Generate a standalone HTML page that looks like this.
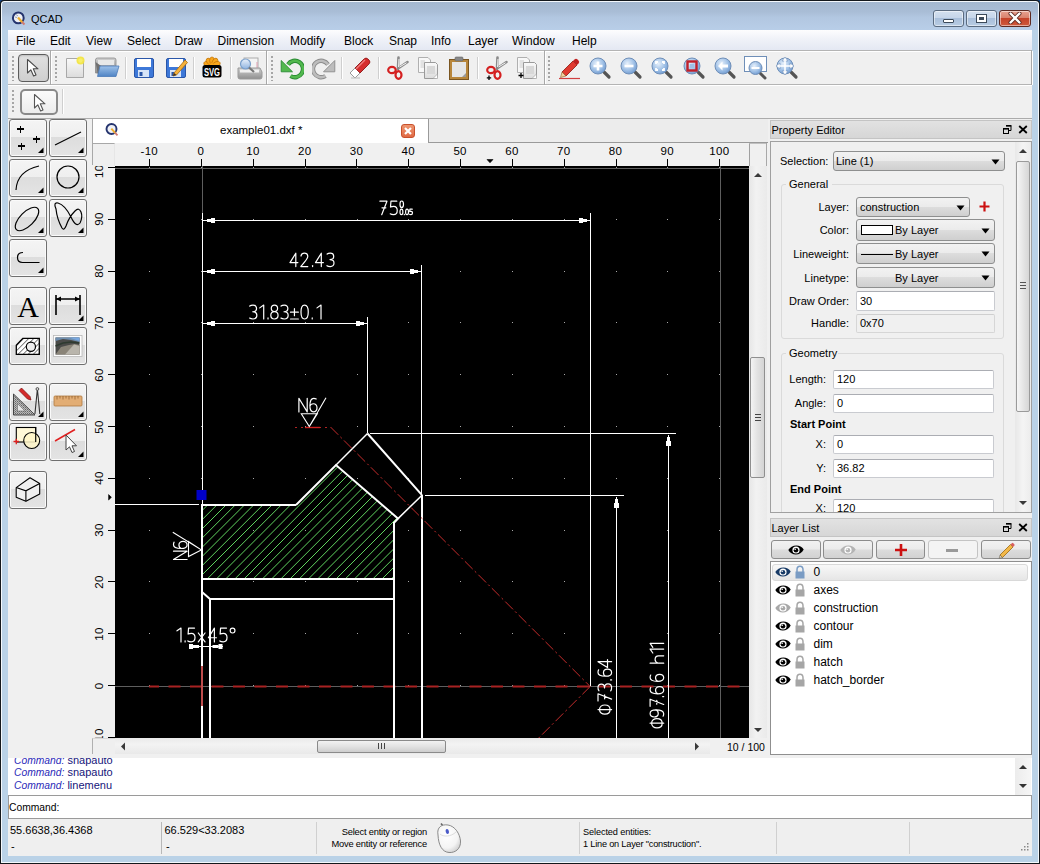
<!DOCTYPE html><html><head><meta charset="utf-8"><style>
*{box-sizing:border-box;margin:0;padding:0}
html,body{width:1040px;height:864px;overflow:hidden;background:#16488a;font-family:"Liberation Sans",sans-serif;font-size:12px;color:#000}
div,span,svg{position:absolute}
.t{white-space:nowrap;line-height:1}
.sep{width:2px;border-left:1px solid #c5c5c5;border-right:1px solid #fff}
.grip{width:2px;background:repeating-linear-gradient(#9a9a9a 0 1px,#fff 1px 2px,transparent 2px 3px)}
.pal{width:38px;height:38px;border:1px solid #6f6f6f;border-radius:3px;box-shadow:inset 0 0 0 1px #fafafa;background:linear-gradient(#f4f4f4 0%,#efefef 47%,#dddddd 48%,#e4e4e4 100%)}
.pal .tri{right:3px;bottom:3px;width:0;height:0;border-left:8px solid transparent;border-bottom:8px solid #000}
.combo{border:1px solid #8e8f8f;border-radius:3px;background:linear-gradient(#f2f2f2 0%,#ebebeb 49%,#dddddd 50%,#cfcfcf 100%)}
.combo .arr{width:0;height:0;border-left:4px solid transparent;border-right:4px solid transparent;border-top:5px solid #000}
.edit{border:1px solid #abadb3;border-top-color:#abadb3;background:#fff}
.lbl{font-size:11px}
</style></head><body><div style="left:0px;top:0px;width:1040px;height:864px;background:#14181c;border-radius:4px 4px 0 0"></div>
<div style="left:1px;top:1px;width:1038px;height:862px;background:#f4f8fc;border-radius:3.5px 3.5px 0 0"></div>
<div style="left:2px;top:2px;width:1036px;height:860px;background:#bad2e7;border-radius:3px 3px 0 0"></div>
<div style="left:2px;top:2px;width:1036px;height:28px;background:linear-gradient(#a4b8d0 0%,#a9bdd6 35%,#b2c7e1 55%,#b8cee8 100%);border-radius:3px 3px 0 0"></div>
<div style="left:8px;top:30px;width:1024px;height:826px;background:#f0f0f0"></div>
<svg style="left:10px;top:10px" width="17" height="17" viewBox="0 0 17 17">
<circle cx="8.3" cy="7.9" r="5.4" fill="#eef0f6" stroke="#25346e" stroke-width="2"/>
<path d="M6 4.5 L8 6 M5 7 L7 7.5" stroke="#9aa4b8" stroke-width="1"/>
<path d="M8 7.5 L12.5 12.5" stroke="#f0b030" stroke-width="2.2"/><path d="M12 12 L14.5 14.5" stroke="#d07a70" stroke-width="2"/>
</svg>
<span class="t" style="left:31px;top:13.69px;font-size:11px;color:#000;">QCAD</span>
<div style="left:933px;top:10px;width:31px;height:17px;background:linear-gradient(#d3e0ef 0%,#c6d6ea 45%,#a9bfdb 50%,#b8cce3 100%);border:1px solid #5a6b80;border-radius:3px;box-shadow:inset 0 0 0 1px rgba(255,255,255,.5)"></div>
<div style="left:966px;top:10px;width:31px;height:17px;background:linear-gradient(#d3e0ef 0%,#c6d6ea 45%,#a9bfdb 50%,#b8cce3 100%);border:1px solid #5a6b80;border-radius:3px;box-shadow:inset 0 0 0 1px rgba(255,255,255,.5)"></div>
<div style="left:999px;top:10px;width:32px;height:17px;background:linear-gradient(#e8a291 0%,#d9826d 45%,#c5432a 50%,#cf5a3c 100%);border:1px solid #5d2a22;border-radius:3px;box-shadow:inset 0 0 0 1px rgba(255,255,255,.5)"></div>
<div style="left:943px;top:19px;width:11px;height:4px;background:#fff;border:1px solid #3c4a5a;border-radius:1px"></div>
<div style="left:976px;top:14px;width:11px;height:9px;border:1px solid #3c4a5a;background:#fff;box-shadow:inset 0 0 0 2px #fff"></div>
<div style="left:979px;top:17px;width:5px;height:3px;background:#3c4a5a"></div>
<svg style="left:1008px;top:12px" width="14" height="12" viewBox="0 0 14 12">
<path d="M2.5 1.5 L11.5 10.5 M11.5 1.5 L2.5 10.5" stroke="#5a2820" stroke-width="4" stroke-linecap="round"/>
<path d="M2.5 1.5 L11.5 10.5 M11.5 1.5 L2.5 10.5" stroke="#fff" stroke-width="2.4" stroke-linecap="round"/>
</svg>
<div style="left:8px;top:30px;width:1024px;height:20px;background:linear-gradient(#fdfdfe 0%,#f1f3f9 40%,#e4e8f3 100%)"></div>
<span class="t" style="left:16px;top:34.84px;font-size:12px;color:#000;">File</span>
<span class="t" style="left:50px;top:34.84px;font-size:12px;color:#000;">Edit</span>
<span class="t" style="left:86px;top:34.84px;font-size:12px;color:#000;">View</span>
<span class="t" style="left:127px;top:34.84px;font-size:12px;color:#000;">Select</span>
<span class="t" style="left:174.5px;top:34.84px;font-size:12px;color:#000;">Draw</span>
<span class="t" style="left:217.5px;top:34.84px;font-size:12px;color:#000;">Dimension</span>
<span class="t" style="left:290px;top:34.84px;font-size:12px;color:#000;">Modify</span>
<span class="t" style="left:344px;top:34.84px;font-size:12px;color:#000;">Block</span>
<span class="t" style="left:389px;top:34.84px;font-size:12px;color:#000;">Snap</span>
<span class="t" style="left:431px;top:34.84px;font-size:12px;color:#000;">Info</span>
<span class="t" style="left:468px;top:34.84px;font-size:12px;color:#000;">Layer</span>
<span class="t" style="left:512px;top:34.84px;font-size:12px;color:#000;">Window</span>
<span class="t" style="left:572px;top:34.84px;font-size:12px;color:#000;">Help</span>
<svg style="left:0;top:0" width="1" height="1"><defs>
<linearGradient id="gBlue" x1="0" y1="0" x2="0" y2="1"><stop offset="0" stop-color="#8fb6e8"/><stop offset="1" stop-color="#3f74c9"/></linearGradient>
<linearGradient id="gFolder" x1="0" y1="0" x2="0" y2="1"><stop offset="0" stop-color="#9fc2ea"/><stop offset="1" stop-color="#4f84c4"/></linearGradient>
<linearGradient id="gLens" x1="0" y1="0" x2="0" y2="1"><stop offset="0" stop-color="#e9f1fb"/><stop offset="1" stop-color="#8fb3df"/></linearGradient>
<radialGradient id="gZoom" cx=".4" cy=".35" r=".7"><stop offset="0" stop-color="#e6f0fb"/><stop offset=".6" stop-color="#9fc0e6"/><stop offset="1" stop-color="#6d98cf"/></radialGradient>
<linearGradient id="gGreen" x1="0" y1="0" x2="0" y2="1"><stop offset="0" stop-color="#7fd37a"/><stop offset="1" stop-color="#2e9a3a"/></linearGradient>
<linearGradient id="gGray" x1="0" y1="0" x2="0" y2="1"><stop offset="0" stop-color="#d0d0d0"/><stop offset="1" stop-color="#8f8f8f"/></linearGradient>
<linearGradient id="gPaper" x1="0" y1="0" x2="0" y2="1"><stop offset="0" stop-color="#fafafa"/><stop offset="1" stop-color="#dcdcdc"/></linearGradient>
</defs></svg>
<div style="left:8px;top:50px;width:1024px;height:35px;background:#f0f0f0"></div>
<div style="left:8px;top:50px;width:43px;height:1px;background:#b4b4b4"></div>
<div style="left:8px;top:51px;width:43px;height:1px;background:#fff"></div>
<div style="left:8px;top:84px;width:43px;height:1px;background:#b4b4b4"></div>
<div style="left:50px;top:50px;width:1px;height:35px;background:#a8a8a8"></div>
<div style="left:51px;top:51px;width:1px;height:34px;background:#fff"></div>
<div style="left:51px;top:50px;width:216px;height:1px;background:#b4b4b4"></div>
<div style="left:51px;top:51px;width:216px;height:1px;background:#fff"></div>
<div style="left:51px;top:84px;width:216px;height:1px;background:#b4b4b4"></div>
<div style="left:266px;top:50px;width:1px;height:35px;background:#a8a8a8"></div>
<div style="left:267px;top:51px;width:1px;height:34px;background:#fff"></div>
<div style="left:267px;top:50px;width:278px;height:1px;background:#b4b4b4"></div>
<div style="left:267px;top:51px;width:278px;height:1px;background:#fff"></div>
<div style="left:267px;top:84px;width:278px;height:1px;background:#b4b4b4"></div>
<div style="left:544px;top:50px;width:1px;height:35px;background:#a8a8a8"></div>
<div style="left:545px;top:51px;width:1px;height:34px;background:#fff"></div>
<div style="left:545px;top:50px;width:487px;height:1px;background:#b4b4b4"></div>
<div style="left:545px;top:51px;width:487px;height:1px;background:#fff"></div>
<div style="left:545px;top:84px;width:487px;height:1px;background:#b4b4b4"></div>
<div style="left:1031px;top:50px;width:1px;height:35px;background:#a8a8a8"></div>
<div style="left:1032px;top:51px;width:1px;height:34px;background:#fff"></div>
<div class="grip" style="left:12px;top:56px;width:2px;height:25px;background:repeating-linear-gradient(#a6a6a6 0 2px,transparent 2px 4px)"></div>
<div class="grip" style="left:55px;top:56px;width:2px;height:25px;background:repeating-linear-gradient(#a6a6a6 0 2px,transparent 2px 4px)"></div>
<div class="grip" style="left:271px;top:56px;width:2px;height:25px;background:repeating-linear-gradient(#a6a6a6 0 2px,transparent 2px 4px)"></div>
<div class="grip" style="left:548px;top:56px;width:2px;height:25px;background:repeating-linear-gradient(#a6a6a6 0 2px,transparent 2px 4px)"></div>
<div style="left:18px;top:54px;width:31px;height:28px;border:1px solid #5c5c5c;border-radius:4px;background:linear-gradient(#e0e0e0,#cfcfcf);box-shadow:inset 0 1px 2px rgba(0,0,0,.15)"></div>
<svg style="left:26px;top:58px" width="14" height="20" viewBox="0 0 14 20"><path d="M1.5 1.5 L1.5 15 L4.8 11.8 L7.6 18 L10 17 L7.3 10.8 L12 10.8 Z" fill="#fff" stroke="#4a4a4a" stroke-width="1.1" stroke-linejoin="round"/></svg>
<svg style="left:63px;top:56px" width="24" height="24" viewBox="0 0 24 24"><path d="M3.5 2.5 H17 L20.5 6 V21.5 H3.5 Z" fill="url(#gPaper)" stroke="#a8a8a8"/><circle cx="17.5" cy="4.5" r="4" fill="#f3e33a" opacity=".9"/><circle cx="17.5" cy="4.5" r="2.2" fill="#f7ef6a"/></svg>
<svg style="left:94px;top:56px" width="26" height="24" viewBox="0 0 26 24"><path d="M1.5 4 Q1.5 2 3.5 2 H20 Q22 2 22 4 V17 H1.5 Z" fill="url(#gGray)" stroke="#8a8a8a" stroke-width=".8"/><rect x="4" y="4" width="16" height="5" fill="#e8e8e8"/><path d="M1.5 6 L4 19 H20" fill="#707070"/><path d="M6 10 H25 L22 20.5 H3.5 Z" fill="url(#gFolder)" stroke="#4a7ab8" stroke-width=".8"/></svg>
<div style="left:125px;top:57px;width:1px;height:22px;background:#cfcfcf"></div>
<div style="left:126px;top:57px;width:1px;height:22px;background:#fff"></div>
<svg style="left:132px;top:56px" width="24" height="24" viewBox="0 0 24 24"><rect x="2.5" y="2.5" width="19" height="19" rx="1.5" fill="#3d78d8" stroke="#2a56a8"/><rect x="5" y="3" width="14" height="8" fill="#fff"/><rect x="6" y="14" width="11" height="7" fill="#d6e4f8"/><rect x="7.5" y="16" width="3" height="4" fill="#2a56a8"/></svg>
<svg style="left:164px;top:56px" width="24" height="24" viewBox="0 0 24 24"><rect x="2.5" y="2.5" width="19" height="19" rx="1.5" fill="#3d78d8" stroke="#2a56a8"/><rect x="5" y="3" width="14" height="8" fill="#fff"/><rect x="6" y="14" width="11" height="7" fill="#d6e4f8"/><rect x="7.5" y="16" width="3" height="4" fill="#2a56a8"/><path d="M10 17 L21 4 L23.5 6.5 L12.5 19 L9 20 Z" fill="#f5b13a" stroke="#a86a10" stroke-width=".8"/><path d="M9 20 L10 17 L12.5 19 Z" fill="#333"/></svg>
<div style="left:193px;top:57px;width:1px;height:22px;background:#cfcfcf"></div>
<div style="left:194px;top:57px;width:1px;height:22px;background:#fff"></div>
<svg style="left:200px;top:56px" width="24" height="24" viewBox="0 0 24 24"><ellipse cx="7.24" cy="7.95" rx="2.4" ry="3.6" transform="rotate(-72 7.24 7.95)" fill="#f7a51c" stroke="#b86a00" stroke-width=".6"/><ellipse cx="9.06" cy="5.45" rx="2.4" ry="3.6" transform="rotate(-36 9.06 5.45)" fill="#f7a51c" stroke="#b86a00" stroke-width=".6"/><ellipse cx="12.00" cy="4.50" rx="2.4" ry="3.6" transform="rotate(0 12.00 4.50)" fill="#f7a51c" stroke="#b86a00" stroke-width=".6"/><ellipse cx="14.94" cy="5.45" rx="2.4" ry="3.6" transform="rotate(36 14.94 5.45)" fill="#f7a51c" stroke="#b86a00" stroke-width=".6"/><ellipse cx="16.76" cy="7.95" rx="2.4" ry="3.6" transform="rotate(72 16.76 7.95)" fill="#f7a51c" stroke="#b86a00" stroke-width=".6"/><circle cx="12" cy="9.5" r="2.5" fill="#f7a51c"/><rect x="2.5" y="9" width="19" height="12.5" rx="2.5" fill="#000"/><text x="12" y="19.5" font-family="Liberation Sans" font-weight="bold" font-size="10" fill="#fff" text-anchor="middle" textLength="16" lengthAdjust="spacingAndGlyphs">SVG</text></svg>
<div style="left:230px;top:57px;width:1px;height:22px;background:#cfcfcf"></div>
<div style="left:231px;top:57px;width:1px;height:22px;background:#fff"></div>
<svg style="left:237px;top:56px" width="26" height="24" viewBox="0 0 26 24"><rect x="7" y="2" width="14" height="12" fill="#f4f4f4" stroke="#aaa"/><path d="M20 6 V13" stroke="#e0a0b0"/><path d="M1 12 H23 L25 16 V21 Q25 23 23 23 H3 Q1 23 1 21 Z" fill="url(#gGray)" stroke="#9a9a9a"/><rect x="3" y="13.5" width="19" height="3" fill="#f0f0f0"/><circle cx="8.5" cy="8" r="5" fill="url(#gLens)" stroke="#7aa0cc" stroke-width="1.2"/><path d="M12 11.5 L17 16" stroke="#777" stroke-width="2.2"/></svg>
<svg style="left:280px;top:56px" width="24" height="24" viewBox="0 0 24 24"><path d="M8 8.5 A8.2 8.2 0 1 1 10.5 20" fill="none" stroke="#2a8a34" stroke-width="4.4"/><path d="M8 8.5 A8.2 8.2 0 1 1 10.5 20" fill="none" stroke="#52b84e" stroke-width="2.6"/><path d="M1.2 4.5 V15.8 H12.5 Z" fill="#52b84e" stroke="#2a8a34" stroke-width=".9" stroke-linejoin="round"/></svg>
<svg style="left:312px;top:56px" width="24" height="24" viewBox="0 0 24 24"><g transform="translate(24 0) scale(-1 1)"><path d="M8 8.5 A8.2 8.2 0 1 1 10.5 20" fill="none" stroke="#8c8c8c" stroke-width="4.4"/><path d="M8 8.5 A8.2 8.2 0 1 1 10.5 20" fill="none" stroke="#bdbdbd" stroke-width="2.6"/><path d="M1.2 4.5 V15.8 H12.5 Z" fill="#bdbdbd" stroke="#8c8c8c" stroke-width=".9" stroke-linejoin="round"/></g></svg>
<div style="left:341px;top:57px;width:1px;height:22px;background:#cfcfcf"></div>
<div style="left:342px;top:57px;width:1px;height:22px;background:#fff"></div>
<svg style="left:348px;top:56px" width="24" height="24" viewBox="0 0 24 24"><path d="M2 17 L14 5 L19 10 L7 22 Z" fill="#fff" stroke="#999"/><path d="M7 12 L16 3 Q18 1 20 3 L21 4 Q23 6 21 8 L12 17 Z" fill="#d62e2e" stroke="#8a1010" stroke-width=".8"/><path d="M8 13 L17 4" stroke="#f08080" stroke-width="1.2"/><path d="M3 22 H12" stroke="#bbb"/></svg>
<div style="left:378px;top:57px;width:1px;height:22px;background:#cfcfcf"></div>
<div style="left:379px;top:57px;width:1px;height:22px;background:#fff"></div>
<svg style="left:386px;top:56px" width="24" height="24" viewBox="0 0 24 24"><path d="M12 13 L12.5 1.5 M12 12.5 L21.5 6" stroke="#8a8a8a" stroke-width="2.6" stroke-linecap="round"/><path d="M12.6 11 L13 3 M13.5 11 L20.5 6.8" stroke="#f4f4f4" stroke-width="1"/><ellipse cx="6" cy="14" rx="3.8" ry="3.2" fill="none" stroke="#d42020" stroke-width="2.2"/><ellipse cx="12.5" cy="19" rx="3" ry="3.8" fill="none" stroke="#d42020" stroke-width="2.2"/></svg>
<svg style="left:416px;top:56px" width="24" height="24" viewBox="0 0 24 24"><path d="M2.5 1.5 H12 L14.5 4 V16.5 H2.5 Z" fill="#f8f8f8" stroke="#b0b0b0"/><path d="M4.5 5 H9 M4.5 7 H9 M4.5 9 H9 M4.5 11 H9" stroke="#ccc"/><path d="M8.5 6.5 H19.5 L21.5 8.5 V20 Q21.5 22.5 19 22.5 H8.5 Z" fill="url(#gPaper)" stroke="#9a9a9a"/><rect x="11" y="10" width="8" height="8" fill="#d8d8d8"/><path d="M17 22.5 L21.5 18 V22.5 Z" fill="#fff" stroke="#999" stroke-width=".6"/></svg>
<svg style="left:447px;top:56px" width="24" height="24" viewBox="0 0 24 24"><rect x="2.5" y="3.5" width="19" height="20" fill="#b8863b" stroke="#7a5520"/><rect x="5" y="6" width="14" height="15" fill="#e6e6e6"/><rect x="8" y="1" width="8" height="4" rx="1" fill="#888" stroke="#666" stroke-width=".6"/><path d="M15 21 L19 17 V21 Z" fill="#9a9a9a"/></svg>
<div style="left:477px;top:57px;width:1px;height:22px;background:#cfcfcf"></div>
<div style="left:478px;top:57px;width:1px;height:22px;background:#fff"></div>
<svg style="left:485px;top:56px" width="24" height="24" viewBox="0 0 24 24"><path d="M12 13 L12.5 1.5 M12 12.5 L21.5 6" stroke="#8a8a8a" stroke-width="2.6" stroke-linecap="round"/><path d="M12.6 11 L13 3 M13.5 11 L20.5 6.8" stroke="#f4f4f4" stroke-width="1"/><ellipse cx="6" cy="14" rx="3.8" ry="3.2" fill="none" stroke="#d42020" stroke-width="2.2"/><ellipse cx="12.5" cy="19" rx="3" ry="3.8" fill="none" stroke="#d42020" stroke-width="2.2"/><path d="M4 19.5 V24 M1.8 21.8 H6.2" stroke="#000" stroke-width="1.3"/></svg>
<svg style="left:515px;top:56px" width="24" height="24" viewBox="0 0 24 24"><path d="M2.5 1.5 H12 L14.5 4 V16.5 H2.5 Z" fill="#f8f8f8" stroke="#b0b0b0"/><path d="M4.5 5 H9 M4.5 7 H9 M4.5 9 H9 M4.5 11 H9" stroke="#ccc"/><path d="M8.5 6.5 H19.5 L21.5 8.5 V20 Q21.5 22.5 19 22.5 H8.5 Z" fill="url(#gPaper)" stroke="#9a9a9a"/><rect x="11" y="10" width="8" height="8" fill="#d8d8d8"/><path d="M17 22.5 L21.5 18 V22.5 Z" fill="#fff" stroke="#999" stroke-width=".6"/><path d="M6 17 V22 M3.5 19.5 H8.5" stroke="#000" stroke-width="1.3"/></svg>
<svg style="left:558px;top:56px" width="24" height="24" viewBox="0 0 24 24"><path d="M4 16 L15 5 L19 9 L8 20 Z" fill="#e03a30" stroke="#8a1a10" stroke-width=".8"/><path d="M15 5 L16.5 3.5 Q18 2 19.5 3.5 L20.5 4.5 Q22 6 20.5 7.5 L19 9 Z" fill="#c02020"/><path d="M4 16 L8 20 L2.5 21.5 Z" fill="#f2d0a0" stroke="#8a5a20" stroke-width=".6"/><path d="M1 22.5 H22" stroke="#d04040" stroke-width="1.2"/></svg>
<svg style="left:588.0px;top:56px" width="24" height="24" viewBox="0 0 24 24"><path d="M14 14 L21 21" stroke="#555" stroke-width="3.2" stroke-linecap="round"/><circle cx="10" cy="10" r="8" fill="url(#gZoom)" stroke="#6f8fb8" stroke-width="1"/><path d="M10 5.5 V14.5 M5.5 10 H14.5" stroke="#fff" stroke-width="2.6"/></svg>
<svg style="left:619.2px;top:56px" width="24" height="24" viewBox="0 0 24 24"><path d="M14 14 L21 21" stroke="#555" stroke-width="3.2" stroke-linecap="round"/><circle cx="10" cy="10" r="8" fill="url(#gZoom)" stroke="#6f8fb8" stroke-width="1"/><path d="M5.5 10 H14.5" stroke="#fff" stroke-width="2.6"/></svg>
<svg style="left:650.4px;top:56px" width="24" height="24" viewBox="0 0 24 24"><path d="M14 14 L21 21" stroke="#555" stroke-width="3.2" stroke-linecap="round"/><circle cx="10" cy="10" r="8" fill="url(#gZoom)" stroke="#6f8fb8" stroke-width="1"/><path d="M6 8 V6 H8 M12 6 H14 V8 M14 12 V14 H12 M8 14 H6 V12" stroke="#fff" stroke-width="1.8" fill="none"/></svg>
<svg style="left:681.6px;top:56px" width="24" height="24" viewBox="0 0 24 24"><path d="M14 14 L21 21" stroke="#555" stroke-width="3.2" stroke-linecap="round"/><circle cx="10" cy="10" r="8" fill="url(#gZoom)" stroke="#6f8fb8" stroke-width="1"/><rect x="5.5" y="5.5" width="9" height="9" fill="none" stroke="#c0202a" stroke-width="2.4"/><rect x="7.8" y="7.8" width="4.4" height="4.4" fill="#9fc0e6"/></svg>
<svg style="left:712.8px;top:56px" width="24" height="24" viewBox="0 0 24 24"><path d="M14 14 L21 21" stroke="#555" stroke-width="3.2" stroke-linecap="round"/><circle cx="10" cy="10" r="8" fill="url(#gZoom)" stroke="#6f8fb8" stroke-width="1"/><path d="M5 10 L9.5 5.5 V8.5 H15 V11.5 H9.5 V14.5 Z" fill="#fff"/></svg>
<svg style="left:744.0px;top:56px" width="24" height="24" viewBox="0 0 24 24"><rect x="0.5" y="0.5" width="22" height="15" fill="#fff" stroke="#6f8fb8"/><path d="M15 16 L21 22" stroke="#555" stroke-width="3" stroke-linecap="round"/><circle cx="11.5" cy="12" r="6.5" fill="url(#gZoom)" stroke="#6f8fb8"/><path d="M7.5 12 H15.5" stroke="#fff" stroke-width="2"/></svg>
<svg style="left:775.2px;top:56px" width="24" height="24" viewBox="0 0 24 24"><path d="M14 14 L21 21" stroke="#555" stroke-width="3.2" stroke-linecap="round"/><circle cx="10" cy="10" r="8" fill="url(#gZoom)" stroke="#6f8fb8"/><path d="M10 1 L13 5 H7 Z M10 19 L13 15 H7 Z M1 10 L5 7 V13 Z M19 10 L15 7 V13 Z" fill="#fff" stroke="#6f8fb8" stroke-width=".6"/><path d="M10 4 V16 M4 10 H16" stroke="#fff" stroke-width="1.6"/></svg>
<div style="left:8px;top:85px;width:1024px;height:1px;background:#fff"></div>
<div style="left:8px;top:118px;width:1024px;height:1px;background:#ababab"></div>
<div class="grip" style="left:12px;top:90px;width:2px;height:24px;background:repeating-linear-gradient(#a6a6a6 0 2px,transparent 2px 4px)"></div>
<div style="left:20px;top:89px;width:38px;height:26px;border:2px solid #8a8a8a;border-radius:5px;background:linear-gradient(#fbfbfb,#ececec)"></div>
<svg style="left:33px;top:93px" width="14" height="20" viewBox="0 0 14 20"><path d="M1.5 1.5 L1.5 15 L4.8 11.8 L7.6 18 L10 17 L7.3 10.8 L12 10.8 Z" fill="#fff" stroke="#555" stroke-width="1.1" stroke-linejoin="round"/></svg>
<div style="left:62px;top:89px;width:1px;height:25px;background:#cfcfcf"></div>
<div style="left:63px;top:89px;width:1px;height:25px;background:#fff"></div>
<div class="pal" style="left:9px;top:119px"></div>
<svg style="left:9px;top:119px" width="38" height="38" viewBox="0 0 38 38"><path d="M11.5 6.5 V13.5 M8 10 H15 M12.5 23.5 V30.5 M9 27 H16 M27.5 16.5 V23.5 M24 20 H31" stroke="#000" stroke-width="1.2" shape-rendering="crispEdges"/></svg>
<svg style="left:37px;top:147px" width="7" height="7" viewBox="0 0 7 7"><path d="M6.5 0.5 V6 H1 Z" fill="#000"/></svg>
<div class="pal" style="left:49px;top:119px"></div>
<svg style="left:49px;top:119px" width="38" height="38" viewBox="0 0 38 38"><path d="M6 26 L32 13" stroke="#000" fill="none" stroke-width="1.2"/></svg>
<svg style="left:77px;top:147px" width="7" height="7" viewBox="0 0 7 7"><path d="M6.5 0.5 V6 H1 Z" fill="#000"/></svg>
<div class="pal" style="left:9px;top:159px"></div>
<svg style="left:9px;top:159px" width="38" height="38" viewBox="0 0 38 38"><path d="M7 31 Q8 12 30 7" stroke="#000" fill="none" stroke-width="1.2"/></svg>
<svg style="left:37px;top:187px" width="7" height="7" viewBox="0 0 7 7"><path d="M6.5 0.5 V6 H1 Z" fill="#000"/></svg>
<div class="pal" style="left:49px;top:159px"></div>
<svg style="left:49px;top:159px" width="38" height="38" viewBox="0 0 38 38"><circle cx="19" cy="18" r="11" stroke="#000" fill="none" stroke-width="1.2"/></svg>
<svg style="left:77px;top:187px" width="7" height="7" viewBox="0 0 7 7"><path d="M6.5 0.5 V6 H1 Z" fill="#000"/></svg>
<div class="pal" style="left:9px;top:199px"></div>
<svg style="left:9px;top:199px" width="38" height="38" viewBox="0 0 38 38"><ellipse cx="18" cy="20" rx="15" ry="7" transform="rotate(-45 18 20)" stroke="#000" fill="none" stroke-width="1.2"/></svg>
<svg style="left:37px;top:227px" width="7" height="7" viewBox="0 0 7 7"><path d="M6.5 0.5 V6 H1 Z" fill="#000"/></svg>
<div class="pal" style="left:49px;top:199px"></div>
<svg style="left:49px;top:199px" width="38" height="38" viewBox="0 0 38 38"><path d="M7 10 Q4 3 9 4 Q16 6 22 18 Q27 29 31 24 Q34 18 32 13 Q30 8 26 12 Q20 18 17 27 Q15 32 13 29 Q8 20 7 10 Z" stroke="#000" fill="none" stroke-width="1.2"/></svg>
<svg style="left:77px;top:227px" width="7" height="7" viewBox="0 0 7 7"><path d="M6.5 0.5 V6 H1 Z" fill="#000"/></svg>
<div class="pal" style="left:9px;top:239px"></div>
<svg style="left:9px;top:239px" width="38" height="38" viewBox="0 0 38 38"><path d="M14 13.5 Q8.5 13.5 8.5 18.5 Q8.5 23.5 13.5 23.5 H30.5" stroke="#000" fill="none" stroke-width="1.2"/></svg>
<svg style="left:37px;top:267px" width="7" height="7" viewBox="0 0 7 7"><path d="M6.5 0.5 V6 H1 Z" fill="#000"/></svg>
<div class="pal" style="left:9px;top:287px"></div>
<svg style="left:9px;top:287px" width="38" height="38" viewBox="0 0 38 38"><text x="19" y="30" font-family="Liberation Serif" font-size="30" text-anchor="middle" fill="#000">A</text></svg>
<div class="pal" style="left:49px;top:287px"></div>
<svg style="left:49px;top:287px" width="38" height="38" viewBox="0 0 38 38"><path d="M7 8 V28 M31 8 V28 M7 12 H31" stroke="#000" stroke-width="1.6" fill="none"/><path d="M7 12 L12 9.5 V14.5 Z M31 12 L26 9.5 V14.5 Z" fill="#000"/></svg>
<svg style="left:77px;top:315px" width="7" height="7" viewBox="0 0 7 7"><path d="M6.5 0.5 V6 H1 Z" fill="#000"/></svg>
<div class="pal" style="left:9px;top:327px"></div>
<svg style="left:9px;top:327px" width="38" height="38" viewBox="0 0 38 38"><defs><pattern id="ph" width="3.6" height="3.6" patternUnits="userSpaceOnUse" patternTransform="rotate(45)"><path d="M0 0 V3.6" stroke="#000" stroke-width="1"/></pattern></defs><path d="M7.3 18.2 L13.8 11.3 H30.3 V27.4 H7.3 Z" fill="#fff"/><path d="M7.3 18.2 L13.8 11.3 H30.3 V27.4 H7.3 Z" fill="url(#ph)" stroke="#000" stroke-width="1.3"/><circle cx="21.9" cy="19.8" r="4.6" fill="#eee" stroke="#000" stroke-width="1.2"/></svg>
<div class="pal" style="left:49px;top:327px"></div>
<svg style="left:49px;top:327px" width="38" height="38" viewBox="0 0 38 38"><rect x="4.5" y="8.5" width="28.5" height="21" fill="#fdfdfd" stroke="#b8b8b8" stroke-width=".8"/><rect x="6.5" y="10.5" width="24" height="17" fill="#4a4a48"/><path d="M6.5 10.5 H30.5 V15 L22 13 L14 12 L6.5 14 Z" fill="#6f8fb0"/><path d="M20 10.5 H30.5 V14 Z" fill="#79a8e0"/><path d="M6.5 27.5 L12 20 L20 18 L26 17 L30.5 18 V27.5 Z" fill="#8a8478"/><path d="M16 27.5 L25 17.5 L30.5 19 V27.5 Z" fill="#b9b5ac"/><path d="M6.5 19 L14 16 L22 15 L30.5 16" stroke="#2e3a30" stroke-width="1.5" fill="none"/></svg>
<div class="pal" style="left:9px;top:383px"></div>
<svg style="left:9px;top:383px" width="38" height="38" viewBox="0 0 38 38"><defs><pattern id="pd" width="2" height="2" patternUnits="userSpaceOnUse"><rect width="2" height="2" fill="#bbb"/><rect width="1" height="1" fill="#666"/><rect x="1" y="1" width="1" height="1" fill="#888"/></pattern></defs><path d="M4.5 11 V32 H26 Z" fill="url(#pd)" stroke="#444" stroke-width="1"/><path d="M8.5 20.5 V28 H16 Z" fill="#e6e6e6" stroke="#777" stroke-width=".7"/><path d="M10 7.5 L12.5 5 L21 13.5 L22 17 L18.5 16 Z" fill="#d42a2a" stroke="#7a1010" stroke-width=".7"/><path d="M28.4 6 L25.9 31 M28.4 6 L30.8 31" stroke="#333" stroke-width="1.1" fill="none"/><circle cx="28.4" cy="6" r="1.4" fill="#ddd" stroke="#333" stroke-width=".8"/></svg>
<svg style="left:37px;top:411px" width="7" height="7" viewBox="0 0 7 7"><path d="M6.5 0.5 V6 H1 Z" fill="#000"/></svg>
<div class="pal" style="left:49px;top:383px"></div>
<svg style="left:49px;top:383px" width="38" height="38" viewBox="0 0 38 38"><rect x="5" y="13" width="28" height="10" rx="1" fill="#e2ad74" stroke="#b07a40" stroke-width=".8"/><path d="M8 13 V16.5 M11 13 V15.5 M14 13 V16.5 M17 13 V15.5 M20 13 V16.5 M23 13 V15.5 M26 13 V16.5 M29 13 V15.5" stroke="#8a5a2a" stroke-width=".7"/></svg>
<svg style="left:77px;top:411px" width="7" height="7" viewBox="0 0 7 7"><path d="M6.5 0.5 V6 H1 Z" fill="#000"/></svg>
<div class="pal" style="left:9px;top:423px"></div>
<svg style="left:9px;top:423px" width="38" height="38" viewBox="0 0 38 38"><rect x="7.3" y="4.5" width="19.4" height="14.5" fill="#fff8d8" stroke="#000" stroke-width="1.1"/><circle cx="22.7" cy="17.5" r="8" fill="#fff6c8" fill-opacity=".85" stroke="#000" stroke-width="1.1"/><path d="M7.3 4.5 H26.7 V19" fill="none" stroke="#000" stroke-width="1.1"/><path d="M4.5 18.5 H10 M7.3 15.8 V21.2" stroke="#e02020" stroke-width="1.3"/></svg>
<div class="pal" style="left:49px;top:423px"></div>
<svg style="left:49px;top:423px" width="38" height="38" viewBox="0 0 38 38"><path d="M6 18 L26 6.5" stroke="#e02020" stroke-width="1.5"/><path d="M17 12 L17 27 L20.5 23.8 L23 29.5 L25.5 28.5 L23 22.8 L27.5 22.8 Z" fill="#fff" stroke="#444" stroke-width="1"/></svg>
<svg style="left:77px;top:451px" width="7" height="7" viewBox="0 0 7 7"><path d="M6.5 0.5 V6 H1 Z" fill="#000"/></svg>
<div class="pal" style="left:9px;top:471px"></div>
<svg style="left:9px;top:471px" width="38" height="38" viewBox="0 0 38 38"><path d="M7.2 16.6 L21 6.8 L30.7 12.5 L30.7 23 L16.9 30.3 L7.2 26.3 Z" fill="#f0f0f0" stroke="#000" stroke-width="1.1" stroke-linejoin="round"/><path d="M7.2 16.6 L16.9 19.8 L30.7 12.5 M16.9 19.8 V30.3" stroke="#000" stroke-width="1.1" fill="none"/></svg>
<div style="left:92px;top:118px;width:1px;height:47px;background:#a8a8a8"></div>
<div style="left:93px;top:119px;width:675px;height:24px;background:#ececec"></div>
<div style="left:93px;top:119px;width:335px;height:24px;background:#fff"></div>
<div style="left:428px;top:119px;width:1px;height:24px;background:#9a9a9a"></div>
<div style="left:429px;top:142px;width:339px;height:1px;background:#9a9a9a"></div>
<svg style="left:104px;top:122px" width="16" height="16" viewBox="0 0 16 16"><circle cx="7.5" cy="7" r="5" fill="#eef0f6" stroke="#25346e" stroke-width="1.9"/><path d="M7.3 6.6 L11.5 11.2" stroke="#f0b030" stroke-width="2"/><path d="M11 10.7 L13.5 13.3" stroke="#d07a70" stroke-width="1.8"/></svg>
<span class="t" style="left:220px;top:124.77px;font-size:11.5px;color:#000;">example01.dxf *</span>
<div style="left:401px;top:124px;width:14px;height:14px;background:linear-gradient(#ee9670,#e06a45);border:1px solid #c8502c;border-radius:3px"></div>
<svg style="left:401px;top:124px" width="14" height="14" viewBox="0 0 14 14"><path d="M4 4 L10 10 M10 4 L4 10" stroke="#fff" stroke-width="2.2"/></svg>
<div style="left:93px;top:143px;width:657px;height:23px;background:#f0f0f0"></div>
<div style="left:93px;top:143px;width:22px;height:23px;background:#efefef;border-right:1px solid #e6e6e6;border-top:1px solid #a8a8a8"></div>
<div style="left:93px;top:166px;width:22px;height:572px;background:#f0f0f0"></div>
<div style="left:115px;top:166px;width:634px;height:572px;background:#000"></div>
<div style="left:749px;top:143px;width:18px;height:23px;background:#f0f0f0;border-left:1px solid #a0a0a0;border-top:1px solid #c0c0c0"></div>
<div style="left:749px;top:166px;width:18px;height:572px;background:linear-gradient(90deg,#e6e6e6,#f2f2f2 40%,#eaeaea)"></div>
<div style="left:766px;top:143px;width:1px;height:23px;background:#a8a8a8"></div>
<svg style="left:753px;top:171px" width="10" height="8" viewBox="0 0 10 8"><path d="M1 6 L5 2 L9 6 Z" fill="#3a3a3a"/></svg>
<svg style="left:753px;top:726px" width="10" height="8" viewBox="0 0 10 8"><path d="M1 2 L5 6 L9 2 Z" fill="#3a3a3a"/></svg>
<div style="left:750px;top:357px;width:15px;height:121px;border:1px solid #8f8f8f;border-radius:2px;background:linear-gradient(90deg,#f4f4f4,#e2e2e2 50%,#d4d4d4)"></div>
<div style="left:755px;top:414px;width:6px;height:1px;background:#444"></div>
<div style="left:755px;top:417px;width:6px;height:1px;background:#444"></div>
<div style="left:755px;top:420px;width:6px;height:1px;background:#444"></div>
<div style="left:93px;top:738px;width:674px;height:17px;background:#f0f0f0"></div>
<div style="left:92px;top:738px;width:23px;height:16px;background:#efefef;border-left:1px solid #b0b0b0;border-top:1px solid #d8d8d8"></div>
<div style="left:115px;top:738px;width:595px;height:16px;background:linear-gradient(#eaeaea,#f3f3f3 40%,#e9e9e9)"></div>
<svg style="left:119px;top:742px" width="8" height="9" viewBox="0 0 8 9"><path d="M6 0.5 L2 4.5 L6 8.5 Z" fill="#3a3a3a"/></svg>
<svg style="left:693px;top:742px" width="8" height="9" viewBox="0 0 8 9"><path d="M2 0.5 L6 4.5 L2 8.5 Z" fill="#3a3a3a"/></svg>
<div style="left:317px;top:740px;width:129px;height:13px;border:1px solid #8a8a8a;border-radius:2px;background:linear-gradient(#f2f2f2,#e2e2e2 50%,#cdcdcd)"></div>
<div style="left:378px;top:743px;width:1px;height:6px;background:#444"></div>
<div style="left:381px;top:743px;width:1px;height:6px;background:#444"></div>
<div style="left:384px;top:743px;width:1px;height:6px;background:#444"></div>
<span class="t" style="left:727px;top:742.11px;font-size:10.5px;color:#000;">10 / 100</span>
<div style="left:149px;top:159px;width:1px;height:7px;background:#000"></div>
<span class="t" style="left:140.5px;top:146px;font-size:11.5px;color:#000;letter-spacing:0.3px">-10</span>
<div style="left:201px;top:159px;width:1px;height:7px;background:#000"></div>
<span class="t" style="left:197.5px;top:146px;font-size:11.5px;color:#000;letter-spacing:0.3px">0</span>
<div style="left:253px;top:159px;width:1px;height:7px;background:#000"></div>
<span class="t" style="left:246.2px;top:146px;font-size:11.5px;color:#000;letter-spacing:0.3px">10</span>
<div style="left:305px;top:159px;width:1px;height:7px;background:#000"></div>
<span class="t" style="left:298.0px;top:146px;font-size:11.5px;color:#000;letter-spacing:0.3px">20</span>
<div style="left:356px;top:159px;width:1px;height:7px;background:#000"></div>
<span class="t" style="left:349.8px;top:146px;font-size:11.5px;color:#000;letter-spacing:0.3px">30</span>
<div style="left:408px;top:159px;width:1px;height:7px;background:#000"></div>
<span class="t" style="left:401.6px;top:146px;font-size:11.5px;color:#000;letter-spacing:0.3px">40</span>
<div style="left:460px;top:159px;width:1px;height:7px;background:#000"></div>
<span class="t" style="left:453.4px;top:146px;font-size:11.5px;color:#000;letter-spacing:0.3px">50</span>
<div style="left:512px;top:159px;width:1px;height:7px;background:#000"></div>
<span class="t" style="left:505.2px;top:146px;font-size:11.5px;color:#000;letter-spacing:0.3px">60</span>
<div style="left:564px;top:159px;width:1px;height:7px;background:#000"></div>
<span class="t" style="left:557.0px;top:146px;font-size:11.5px;color:#000;letter-spacing:0.3px">70</span>
<div style="left:616px;top:159px;width:1px;height:7px;background:#000"></div>
<span class="t" style="left:608.8px;top:146px;font-size:11.5px;color:#000;letter-spacing:0.3px">80</span>
<div style="left:667px;top:159px;width:1px;height:7px;background:#000"></div>
<span class="t" style="left:660.6px;top:146px;font-size:11.5px;color:#000;letter-spacing:0.3px">90</span>
<div style="left:719px;top:159px;width:1px;height:7px;background:#000"></div>
<span class="t" style="left:709.3px;top:146px;font-size:11.5px;color:#000;letter-spacing:0.3px">100</span>
<svg style="left:486px;top:158.5px" width="8" height="5" viewBox="0 0 8 5"><path d="M1 0.5 H7 L4 3.8 Z" fill="#000" stroke="#000" stroke-width=".6"/></svg>
<div style="left:93px;top:166px;width:22px;height:572px;overflow:hidden">
<div style="left:15px;top:571px;width:7px;height:1px;background:#000"></div>
<span class="t" style="left:7px;top:571.3px;font-size:11.5px;letter-spacing:0.3px;transform:translate(-50%,-50%) rotate(-90deg);transform-origin:50% 50%">-10</span>
<div style="left:15px;top:519px;width:7px;height:1px;background:#000"></div>
<span class="t" style="left:7px;top:519.5px;font-size:11.5px;letter-spacing:0.3px;transform:translate(-50%,-50%) rotate(-90deg);transform-origin:50% 50%">0</span>
<div style="left:15px;top:467px;width:7px;height:1px;background:#000"></div>
<span class="t" style="left:7px;top:467.7px;font-size:11.5px;letter-spacing:0.3px;transform:translate(-50%,-50%) rotate(-90deg);transform-origin:50% 50%">10</span>
<div style="left:15px;top:415px;width:7px;height:1px;background:#000"></div>
<span class="t" style="left:7px;top:415.9px;font-size:11.5px;letter-spacing:0.3px;transform:translate(-50%,-50%) rotate(-90deg);transform-origin:50% 50%">20</span>
<div style="left:15px;top:364px;width:7px;height:1px;background:#000"></div>
<span class="t" style="left:7px;top:364.1px;font-size:11.5px;letter-spacing:0.3px;transform:translate(-50%,-50%) rotate(-90deg);transform-origin:50% 50%">30</span>
<div style="left:15px;top:312px;width:7px;height:1px;background:#000"></div>
<span class="t" style="left:7px;top:312.3px;font-size:11.5px;letter-spacing:0.3px;transform:translate(-50%,-50%) rotate(-90deg);transform-origin:50% 50%">40</span>
<div style="left:15px;top:260px;width:7px;height:1px;background:#000"></div>
<span class="t" style="left:7px;top:260.5px;font-size:11.5px;letter-spacing:0.3px;transform:translate(-50%,-50%) rotate(-90deg);transform-origin:50% 50%">50</span>
<div style="left:15px;top:208px;width:7px;height:1px;background:#000"></div>
<span class="t" style="left:7px;top:208.7px;font-size:11.5px;letter-spacing:0.3px;transform:translate(-50%,-50%) rotate(-90deg);transform-origin:50% 50%">60</span>
<div style="left:15px;top:156px;width:7px;height:1px;background:#000"></div>
<span class="t" style="left:7px;top:156.9px;font-size:11.5px;letter-spacing:0.3px;transform:translate(-50%,-50%) rotate(-90deg);transform-origin:50% 50%">70</span>
<div style="left:15px;top:105px;width:7px;height:1px;background:#000"></div>
<span class="t" style="left:7px;top:105.1px;font-size:11.5px;letter-spacing:0.3px;transform:translate(-50%,-50%) rotate(-90deg);transform-origin:50% 50%">80</span>
<div style="left:15px;top:53px;width:7px;height:1px;background:#000"></div>
<span class="t" style="left:7px;top:53.3px;font-size:11.5px;letter-spacing:0.3px;transform:translate(-50%,-50%) rotate(-90deg);transform-origin:50% 50%">90</span>
<div style="left:15px;top:1px;width:7px;height:1px;background:#000"></div>
<span class="t" style="left:7px;top:1.5px;font-size:11.5px;letter-spacing:0.3px;transform:translate(-50%,-50%) rotate(-90deg);transform-origin:50% 50%">100</span>
</div>
<svg style="left:107.5px;top:493.5px" width="5" height="7" viewBox="0 0 5 7"><path d="M0.6 0.6 V6 L3.4 3.3 Z" fill="#000" stroke="#000" stroke-width=".6"/></svg>
<svg style="left:115px;top:166px" width="634" height="572" viewBox="115 166 634 572"><rect x="149" y="685" width="1" height="1" fill="#a8a8a8"/><rect x="149" y="633" width="1" height="1" fill="#a8a8a8"/><rect x="149" y="581" width="1" height="1" fill="#a8a8a8"/><rect x="149" y="530" width="1" height="1" fill="#a8a8a8"/><rect x="149" y="478" width="1" height="1" fill="#a8a8a8"/><rect x="149" y="426" width="1" height="1" fill="#a8a8a8"/><rect x="149" y="374" width="1" height="1" fill="#a8a8a8"/><rect x="149" y="322" width="1" height="1" fill="#a8a8a8"/><rect x="149" y="271" width="1" height="1" fill="#a8a8a8"/><rect x="149" y="219" width="1" height="1" fill="#a8a8a8"/><rect x="149" y="167" width="1" height="1" fill="#a8a8a8"/><rect x="201" y="685" width="1" height="1" fill="#a8a8a8"/><rect x="201" y="633" width="1" height="1" fill="#a8a8a8"/><rect x="201" y="581" width="1" height="1" fill="#a8a8a8"/><rect x="201" y="530" width="1" height="1" fill="#a8a8a8"/><rect x="201" y="478" width="1" height="1" fill="#a8a8a8"/><rect x="201" y="426" width="1" height="1" fill="#a8a8a8"/><rect x="201" y="374" width="1" height="1" fill="#a8a8a8"/><rect x="201" y="322" width="1" height="1" fill="#a8a8a8"/><rect x="201" y="271" width="1" height="1" fill="#a8a8a8"/><rect x="201" y="219" width="1" height="1" fill="#a8a8a8"/><rect x="201" y="167" width="1" height="1" fill="#a8a8a8"/><rect x="253" y="685" width="1" height="1" fill="#a8a8a8"/><rect x="253" y="633" width="1" height="1" fill="#a8a8a8"/><rect x="253" y="581" width="1" height="1" fill="#a8a8a8"/><rect x="253" y="530" width="1" height="1" fill="#a8a8a8"/><rect x="253" y="478" width="1" height="1" fill="#a8a8a8"/><rect x="253" y="426" width="1" height="1" fill="#a8a8a8"/><rect x="253" y="374" width="1" height="1" fill="#a8a8a8"/><rect x="253" y="322" width="1" height="1" fill="#a8a8a8"/><rect x="253" y="271" width="1" height="1" fill="#a8a8a8"/><rect x="253" y="219" width="1" height="1" fill="#a8a8a8"/><rect x="253" y="167" width="1" height="1" fill="#a8a8a8"/><rect x="305" y="685" width="1" height="1" fill="#a8a8a8"/><rect x="305" y="633" width="1" height="1" fill="#a8a8a8"/><rect x="305" y="581" width="1" height="1" fill="#a8a8a8"/><rect x="305" y="530" width="1" height="1" fill="#a8a8a8"/><rect x="305" y="478" width="1" height="1" fill="#a8a8a8"/><rect x="305" y="426" width="1" height="1" fill="#a8a8a8"/><rect x="305" y="374" width="1" height="1" fill="#a8a8a8"/><rect x="305" y="322" width="1" height="1" fill="#a8a8a8"/><rect x="305" y="271" width="1" height="1" fill="#a8a8a8"/><rect x="305" y="219" width="1" height="1" fill="#a8a8a8"/><rect x="305" y="167" width="1" height="1" fill="#a8a8a8"/><rect x="357" y="685" width="1" height="1" fill="#a8a8a8"/><rect x="357" y="633" width="1" height="1" fill="#a8a8a8"/><rect x="357" y="581" width="1" height="1" fill="#a8a8a8"/><rect x="357" y="530" width="1" height="1" fill="#a8a8a8"/><rect x="357" y="478" width="1" height="1" fill="#a8a8a8"/><rect x="357" y="426" width="1" height="1" fill="#a8a8a8"/><rect x="357" y="374" width="1" height="1" fill="#a8a8a8"/><rect x="357" y="322" width="1" height="1" fill="#a8a8a8"/><rect x="357" y="271" width="1" height="1" fill="#a8a8a8"/><rect x="357" y="219" width="1" height="1" fill="#a8a8a8"/><rect x="357" y="167" width="1" height="1" fill="#a8a8a8"/><rect x="408" y="685" width="1" height="1" fill="#a8a8a8"/><rect x="408" y="633" width="1" height="1" fill="#a8a8a8"/><rect x="408" y="581" width="1" height="1" fill="#a8a8a8"/><rect x="408" y="530" width="1" height="1" fill="#a8a8a8"/><rect x="408" y="478" width="1" height="1" fill="#a8a8a8"/><rect x="408" y="426" width="1" height="1" fill="#a8a8a8"/><rect x="408" y="374" width="1" height="1" fill="#a8a8a8"/><rect x="408" y="322" width="1" height="1" fill="#a8a8a8"/><rect x="408" y="271" width="1" height="1" fill="#a8a8a8"/><rect x="408" y="219" width="1" height="1" fill="#a8a8a8"/><rect x="408" y="167" width="1" height="1" fill="#a8a8a8"/><rect x="460" y="685" width="1" height="1" fill="#a8a8a8"/><rect x="460" y="633" width="1" height="1" fill="#a8a8a8"/><rect x="460" y="581" width="1" height="1" fill="#a8a8a8"/><rect x="460" y="530" width="1" height="1" fill="#a8a8a8"/><rect x="460" y="478" width="1" height="1" fill="#a8a8a8"/><rect x="460" y="426" width="1" height="1" fill="#a8a8a8"/><rect x="460" y="374" width="1" height="1" fill="#a8a8a8"/><rect x="460" y="322" width="1" height="1" fill="#a8a8a8"/><rect x="460" y="271" width="1" height="1" fill="#a8a8a8"/><rect x="460" y="219" width="1" height="1" fill="#a8a8a8"/><rect x="460" y="167" width="1" height="1" fill="#a8a8a8"/><rect x="512" y="685" width="1" height="1" fill="#a8a8a8"/><rect x="512" y="633" width="1" height="1" fill="#a8a8a8"/><rect x="512" y="581" width="1" height="1" fill="#a8a8a8"/><rect x="512" y="530" width="1" height="1" fill="#a8a8a8"/><rect x="512" y="478" width="1" height="1" fill="#a8a8a8"/><rect x="512" y="426" width="1" height="1" fill="#a8a8a8"/><rect x="512" y="374" width="1" height="1" fill="#a8a8a8"/><rect x="512" y="322" width="1" height="1" fill="#a8a8a8"/><rect x="512" y="271" width="1" height="1" fill="#a8a8a8"/><rect x="512" y="219" width="1" height="1" fill="#a8a8a8"/><rect x="512" y="167" width="1" height="1" fill="#a8a8a8"/><rect x="564" y="685" width="1" height="1" fill="#a8a8a8"/><rect x="564" y="633" width="1" height="1" fill="#a8a8a8"/><rect x="564" y="581" width="1" height="1" fill="#a8a8a8"/><rect x="564" y="530" width="1" height="1" fill="#a8a8a8"/><rect x="564" y="478" width="1" height="1" fill="#a8a8a8"/><rect x="564" y="426" width="1" height="1" fill="#a8a8a8"/><rect x="564" y="374" width="1" height="1" fill="#a8a8a8"/><rect x="564" y="322" width="1" height="1" fill="#a8a8a8"/><rect x="564" y="271" width="1" height="1" fill="#a8a8a8"/><rect x="564" y="219" width="1" height="1" fill="#a8a8a8"/><rect x="564" y="167" width="1" height="1" fill="#a8a8a8"/><rect x="616" y="685" width="1" height="1" fill="#a8a8a8"/><rect x="616" y="633" width="1" height="1" fill="#a8a8a8"/><rect x="616" y="581" width="1" height="1" fill="#a8a8a8"/><rect x="616" y="530" width="1" height="1" fill="#a8a8a8"/><rect x="616" y="478" width="1" height="1" fill="#a8a8a8"/><rect x="616" y="426" width="1" height="1" fill="#a8a8a8"/><rect x="616" y="374" width="1" height="1" fill="#a8a8a8"/><rect x="616" y="322" width="1" height="1" fill="#a8a8a8"/><rect x="616" y="271" width="1" height="1" fill="#a8a8a8"/><rect x="616" y="219" width="1" height="1" fill="#a8a8a8"/><rect x="616" y="167" width="1" height="1" fill="#a8a8a8"/><rect x="667" y="685" width="1" height="1" fill="#a8a8a8"/><rect x="667" y="633" width="1" height="1" fill="#a8a8a8"/><rect x="667" y="581" width="1" height="1" fill="#a8a8a8"/><rect x="667" y="530" width="1" height="1" fill="#a8a8a8"/><rect x="667" y="478" width="1" height="1" fill="#a8a8a8"/><rect x="667" y="426" width="1" height="1" fill="#a8a8a8"/><rect x="667" y="374" width="1" height="1" fill="#a8a8a8"/><rect x="667" y="322" width="1" height="1" fill="#a8a8a8"/><rect x="667" y="271" width="1" height="1" fill="#a8a8a8"/><rect x="667" y="219" width="1" height="1" fill="#a8a8a8"/><rect x="667" y="167" width="1" height="1" fill="#a8a8a8"/><rect x="719" y="685" width="1" height="1" fill="#a8a8a8"/><rect x="719" y="633" width="1" height="1" fill="#a8a8a8"/><rect x="719" y="581" width="1" height="1" fill="#a8a8a8"/><rect x="719" y="530" width="1" height="1" fill="#a8a8a8"/><rect x="719" y="478" width="1" height="1" fill="#a8a8a8"/><rect x="719" y="426" width="1" height="1" fill="#a8a8a8"/><rect x="719" y="374" width="1" height="1" fill="#a8a8a8"/><rect x="719" y="322" width="1" height="1" fill="#a8a8a8"/><rect x="719" y="271" width="1" height="1" fill="#a8a8a8"/><rect x="719" y="219" width="1" height="1" fill="#a8a8a8"/><rect x="719" y="167" width="1" height="1" fill="#a8a8a8"/><path d="M115 168.5 H749 M202.5 166 V738 M720.5 166 V738 M115 686.5 H749" stroke="#5e5e5e" stroke-width="1" shape-rendering="crispEdges" fill="none"/><path d="M149 686.5 H749" stroke="#a82222" stroke-width="2" stroke-dasharray="12 9.5" stroke-dashoffset="2"/><clipPath id="hc"><polygon points="202,505 296,505 336,465 398,518.6 394,522.7 394,579 202,579"/></clipPath><path clip-path="url(#hc)" d="M-55.0 740 L245.0 440 M-45.8 740 L254.2 440 M-36.6 740 L263.4 440 M-27.4 740 L272.6 440 M-18.2 740 L281.8 440 M-9.0 740 L291.0 440 M0.2 740 L300.2 440 M9.4 740 L309.4 440 M18.6 740 L318.6 440 M27.8 740 L327.8 440 M37.0 740 L337.0 440 M46.2 740 L346.2 440 M55.4 740 L355.4 440 M64.6 740 L364.6 440 M73.8 740 L373.8 440 M83.0 740 L383.0 440 M92.2 740 L392.2 440 M101.4 740 L401.4 440 M110.6 740 L410.6 440 M119.8 740 L419.8 440 M129.0 740 L429.0 440 M138.2 740 L438.2 440 M147.4 740 L447.4 440 M156.6 740 L456.6 440 M165.8 740 L465.8 440 M175.0 740 L475.0 440 M184.2 740 L484.2 440 M193.4 740 L493.4 440 M202.6 740 L502.6 440 M211.8 740 L511.8 440 M221.0 740 L521.0 440 M230.2 740 L530.2 440 M239.4 740 L539.4 440 M248.6 740 L548.6 440 M257.8 740 L557.8 440 M267.0 740 L567.0 440 M276.2 740 L576.2 440 M285.4 740 L585.4 440 M294.6 740 L594.6 440 M303.8 740 L603.8 440 M313.0 740 L613.0 440 M322.2 740 L622.2 440 M331.4 740 L631.4 440 M340.6 740 L640.6 440 M349.8 740 L649.8 440" stroke="#5fd35f" stroke-width="1" fill="none"/><path d="M201 505 H296 M202 505 V738 M201 579 H395 M210 599 H395 M210 599 V738 M394 522 V738 M422 495 V738" stroke="#fff" stroke-width="2" fill="none" shape-rendering="crispEdges"/><path d="M296 505 L336 465 L398 518.6 L394 522.7 M367.5 433.5 L422 495.2 M202 592 L210 599" stroke="#fff" stroke-width="2" fill="none" stroke-linejoin="miter"/><path d="M336 465 L367.5 433.5 M422 495.2 L398 518.6" stroke="#fff" stroke-width="1.5" fill="none"/><path d="M115 504.5 H199 M202.5 213 V505 M421.5 265 V495 M367.5 317 V433 M370 433.5 H676 M425 495.5 H624 M590.5 213 V686 M616.5 497 V738 M668.5 435 V738 M202 220.5 H591 M202 271.5 H422 M202 323.5 H368 M189 646.5 H223" stroke="#fff" stroke-width="1" fill="none" shape-rendering="crispEdges"/><path d="M202 666 V706" stroke="#b02020" stroke-width="1.6"/><rect x="207" y="219.0" width="4" height="3" fill="#fff"/><rect x="211" y="218.0" width="4" height="5" fill="#fff"/><rect x="583" y="219.0" width="4" height="3" fill="#fff"/><rect x="579" y="218.0" width="4" height="5" fill="#fff"/><rect x="207" y="270.0" width="4" height="3" fill="#fff"/><rect x="211" y="269.0" width="4" height="5" fill="#fff"/><rect x="414" y="270.0" width="4" height="3" fill="#fff"/><rect x="410" y="269.0" width="4" height="5" fill="#fff"/><rect x="207" y="322.0" width="4" height="3" fill="#fff"/><rect x="211" y="321.0" width="4" height="5" fill="#fff"/><rect x="360" y="322.0" width="4" height="3" fill="#fff"/><rect x="356" y="321.0" width="4" height="5" fill="#fff"/><rect x="615.0" y="499" width="3" height="4" fill="#fff"/><rect x="614.0" y="503" width="5" height="5" fill="#fff"/><rect x="667.0" y="437" width="3" height="4" fill="#fff"/><rect x="666.0" y="441" width="5" height="5" fill="#fff"/><rect x="189" y="644" width="4" height="5" fill="#fff"/><rect x="193" y="645" width="6" height="3" fill="#fff"/><rect x="218.5" y="644" width="4" height="5" fill="#fff"/><rect x="212.5" y="645" width="6" height="3" fill="#fff"/><path d="M295 427.5 H330" stroke="#b02424" stroke-width="1" stroke-dasharray="2 4" shape-rendering="crispEdges"/><path d="M330.5 427 L590.2 686.5" stroke="#c42c2c" stroke-width="1" fill="none" stroke-dasharray="11 3 2 3"/><path d="M590.2 686.5 L538 738.7" stroke="#c42c2c" stroke-width="1" fill="none" stroke-dasharray="11 3 2 3"/><path d="M305 427.5 H320" stroke="#d02020" stroke-width="1.4"/><path d="M301.3 413.8 H317.3 L309.3 426.5 Z M309.3 426.5 L326 397.8" stroke="#fff" stroke-width="1.1" fill="none"/><g transform="translate(298.9 398.3)" fill="none" stroke="#ffffff" stroke-width="1.2" vector-effect="non-scaling-stroke" stroke-linecap="round" stroke-linejoin="round"><g style="vector-effect:non-scaling-stroke"><path vector-effect="non-scaling-stroke" transform="translate(0.00 0) scale(1.5111)" d="M0 9 V0 L5.5 9 V0"/><path vector-effect="non-scaling-stroke" transform="translate(11.00 0) scale(1.5111)" d="M4.2 0.4 C3.7 0.1 3.1 0 2.5 0 C0.9 0 0 1.8 0 5 C0 7.8 0.9 9 2.35 9 C3.8 9 4.7 8 4.7 6.3 C4.7 4.6 3.8 3.6 2.35 3.6 C1.2 3.6 0.3 4.3 0 5.2"/></g></g><path d="M188.5 541.5 V556.5 L201.3 549.9 Z M201.3 549.9 L172.8 532.2" stroke="#fff" stroke-width="1.1" fill="none"/><g transform="translate(173.5 559.5) rotate(-90)" fill="none" stroke="#ffffff" stroke-width="1.2" vector-effect="non-scaling-stroke" stroke-linecap="round" stroke-linejoin="round"><g style="vector-effect:non-scaling-stroke"><path vector-effect="non-scaling-stroke" transform="translate(0.00 0) scale(1.5111)" d="M0 9 V0 L5.5 9 V0"/><path vector-effect="non-scaling-stroke" transform="translate(11.00 0) scale(1.5111)" d="M4.2 0.4 C3.7 0.1 3.1 0 2.5 0 C0.9 0 0 1.8 0 5 C0 7.8 0.9 9 2.35 9 C3.8 9 4.7 8 4.7 6.3 C4.7 4.6 3.8 3.6 2.35 3.6 C1.2 3.6 0.3 4.3 0 5.2"/></g></g><g transform="translate(290 253.2)" fill="none" stroke="#ffffff" stroke-width="1.2" vector-effect="non-scaling-stroke" stroke-linecap="round" stroke-linejoin="round"><g style="vector-effect:non-scaling-stroke"><path vector-effect="non-scaling-stroke" transform="translate(0.00 0) scale(1.4889)" d="M3.9 9 V0 L0 6.3 H5.3"/><path vector-effect="non-scaling-stroke" transform="translate(10.80 0) scale(1.4889)" d="M0.1 1.9 C0.4 0.6 1.2 0 2.4 0 C3.9 0 4.7 0.9 4.7 2.3 C4.7 3.7 3.6 4.9 0 9 H4.7"/><path vector-effect="non-scaling-stroke" transform="translate(22.00 0) scale(1.4889)" d="M0.4 8.3 V9"/><path vector-effect="non-scaling-stroke" transform="translate(25.50 0) scale(1.4889)" d="M3.9 9 V0 L0 6.3 H5.3"/><path vector-effect="non-scaling-stroke" transform="translate(37.00 0) scale(1.4889)" d="M0.1 0.6 C0.6 0.2 1.3 0 2.2 0 C3.8 0 4.5 0.9 4.5 2.2 C4.5 3.5 3.6 4.3 2 4.3 C3.9 4.3 4.7 5.3 4.7 6.6 C4.7 8.1 3.8 9 2.2 9 C1.3 9 0.5 8.8 0 8.4"/></g></g><g transform="translate(249.6 305.1)" fill="none" stroke="#ffffff" stroke-width="1.2" vector-effect="non-scaling-stroke" stroke-linecap="round" stroke-linejoin="round"><g style="vector-effect:non-scaling-stroke"><path vector-effect="non-scaling-stroke" transform="translate(0.00 0) scale(1.5444)" d="M0.1 0.6 C0.6 0.2 1.3 0 2.2 0 C3.8 0 4.5 0.9 4.5 2.2 C4.5 3.5 3.6 4.3 2 4.3 C3.9 4.3 4.7 5.3 4.7 6.6 C4.7 8.1 3.8 9 2.2 9 C1.3 9 0.5 8.8 0 8.4"/><path vector-effect="non-scaling-stroke" transform="translate(10.10 0) scale(1.5444)" d="M0 1.8 L2.6 0 V9"/><path vector-effect="non-scaling-stroke" transform="translate(17.80 0) scale(1.5444)" d="M0.4 8.3 V9"/><path vector-effect="non-scaling-stroke" transform="translate(21.20 0) scale(1.5444)" d="M2.35 4.2 C0.9 4.2 0.3 3.3 0.3 2.1 C0.3 0.8 1.1 0 2.35 0 C3.6 0 4.4 0.8 4.4 2.1 C4.4 3.3 3.8 4.2 2.35 4.2 C0.8 4.2 0 5.2 0 6.6 C0 8.1 0.9 9 2.35 9 C3.8 9 4.7 8.1 4.7 6.6 C4.7 5.2 3.9 4.2 2.35 4.2 Z"/><path vector-effect="non-scaling-stroke" transform="translate(31.30 0) scale(1.5444)" d="M0.1 0.6 C0.6 0.2 1.3 0 2.2 0 C3.8 0 4.5 0.9 4.5 2.2 C4.5 3.5 3.6 4.3 2 4.3 C3.9 4.3 4.7 5.3 4.7 6.6 C4.7 8.1 3.8 9 2.2 9 C1.3 9 0.5 8.8 0 8.4"/><path vector-effect="non-scaling-stroke" transform="translate(40.90 0) scale(1.5444)" d="M2.55 2.3 V6.9 M0 4.6 H5.1 M0 9 H5.1"/><path vector-effect="non-scaling-stroke" transform="translate(51.40 0) scale(1.5444)" d="M2.35 0 C4.1 0 4.7 1.6 4.7 4.5 C4.7 7.4 4.1 9 2.35 9 C0.6 9 0 7.4 0 4.5 C0 1.6 0.6 0 2.35 0 Z"/><path vector-effect="non-scaling-stroke" transform="translate(62.00 0) scale(1.5444)" d="M0.4 8.3 V9"/><path vector-effect="non-scaling-stroke" transform="translate(67.40 0) scale(1.5444)" d="M0 1.8 L2.6 0 V9"/></g></g><g transform="translate(379.9 201.2)" fill="none" stroke="#ffffff" stroke-width="1.2" vector-effect="non-scaling-stroke" stroke-linecap="round" stroke-linejoin="round"><g style="vector-effect:non-scaling-stroke"><path vector-effect="non-scaling-stroke" transform="translate(0.00 0) scale(1.5000)" d="M0 0 H4.7 L1.2 9 M1.4 4.4 H4"/><path vector-effect="non-scaling-stroke" transform="translate(10.30 0) scale(1.5000)" d="M4.4 0 H0.5 L0.2 3.9 C0.8 3.6 1.5 3.4 2.3 3.4 C3.9 3.4 4.7 4.5 4.7 6.2 C4.7 8 3.7 9 2.2 9 C1.3 9 0.5 8.8 0 8.4"/></g></g><g transform="translate(400 201)" fill="none" stroke="#ffffff" stroke-width="1.2" vector-effect="non-scaling-stroke" stroke-linecap="round" stroke-linejoin="round"><g style="vector-effect:non-scaling-stroke"><path vector-effect="non-scaling-stroke" transform="translate(0.00 0) scale(0.7444)" d="M2.35 0 C4.1 0 4.7 1.6 4.7 4.5 C4.7 7.4 4.1 9 2.35 9 C0.6 9 0 7.4 0 4.5 C0 1.6 0.6 0 2.35 0 Z"/></g></g><g transform="translate(400 209.2)" fill="none" stroke="#ffffff" stroke-width="1.2" vector-effect="non-scaling-stroke" stroke-linecap="round" stroke-linejoin="round"><g style="vector-effect:non-scaling-stroke"><path vector-effect="non-scaling-stroke" transform="translate(0.00 0) scale(0.6111)" d="M2.35 0 C4.1 0 4.7 1.6 4.7 4.5 C4.7 7.4 4.1 9 2.35 9 C0.6 9 0 7.4 0 4.5 C0 1.6 0.6 0 2.35 0 Z"/><path vector-effect="non-scaling-stroke" transform="translate(4.10 0) scale(0.6111)" d="M0.4 8.3 V9"/><path vector-effect="non-scaling-stroke" transform="translate(5.60 0) scale(0.6111)" d="M2.35 0 C4.1 0 4.7 1.6 4.7 4.5 C4.7 7.4 4.1 9 2.35 9 C0.6 9 0 7.4 0 4.5 C0 1.6 0.6 0 2.35 0 Z"/><path vector-effect="non-scaling-stroke" transform="translate(9.60 0) scale(0.6111)" d="M4.4 0 H0.5 L0.2 3.9 C0.8 3.6 1.5 3.4 2.3 3.4 C3.9 3.4 4.7 4.5 4.7 6.2 C4.7 8 3.7 9 2.2 9 C1.3 9 0.5 8.8 0 8.4"/></g></g><g transform="translate(177 628.1)" fill="none" stroke="#ffffff" stroke-width="1.2" vector-effect="non-scaling-stroke" stroke-linecap="round" stroke-linejoin="round"><g style="vector-effect:non-scaling-stroke"><path vector-effect="non-scaling-stroke" transform="translate(0.00 0) scale(1.5333)" d="M0 1.8 L2.6 0 V9"/><path vector-effect="non-scaling-stroke" transform="translate(7.50 0) scale(1.5333)" d="M0.4 8.3 V9"/><path vector-effect="non-scaling-stroke" transform="translate(10.80 0) scale(1.5333)" d="M4.4 0 H0.5 L0.2 3.9 C0.8 3.6 1.5 3.4 2.3 3.4 C3.9 3.4 4.7 4.5 4.7 6.2 C4.7 8 3.7 9 2.2 9 C1.3 9 0.5 8.8 0 8.4"/><path vector-effect="non-scaling-stroke" transform="translate(21.30 0) scale(1.5333)" d="M0 3.2 L4.4 9 M4.4 3.2 L0 9"/><path vector-effect="non-scaling-stroke" transform="translate(31.40 0) scale(1.5333)" d="M3.9 9 V0 L0 6.3 H5.3"/><path vector-effect="non-scaling-stroke" transform="translate(42.80 0) scale(1.5333)" d="M4.4 0 H0.5 L0.2 3.9 C0.8 3.6 1.5 3.4 2.3 3.4 C3.9 3.4 4.7 4.5 4.7 6.2 C4.7 8 3.7 9 2.2 9 C1.3 9 0.5 8.8 0 8.4"/><path vector-effect="non-scaling-stroke" transform="translate(53.20 0) scale(1.5333)" d="M1.55 0 C2.5 0 3.1 0.6 3.1 1.6 C3.1 2.6 2.5 3.2 1.55 3.2 C0.6 3.2 0 2.6 0 1.6 C0 0.6 0.6 0 1.55 0 Z"/></g></g><g transform="translate(598 714.2) rotate(-90)" fill="none" stroke="#ffffff" stroke-width="1.2" vector-effect="non-scaling-stroke" stroke-linecap="round" stroke-linejoin="round"><g style="vector-effect:non-scaling-stroke"><path vector-effect="non-scaling-stroke" transform="translate(0.00 0) scale(1.5111)" d="M3.05 0 V9 M3.05 1 C1 1 0 2.6 0 4.5 C0 6.4 1 8 3.05 8 C5.1 8 6.1 6.4 6.1 4.5 C6.1 2.6 5.1 1 3.05 1 Z"/><path vector-effect="non-scaling-stroke" transform="translate(13.30 0) scale(1.5111)" d="M0 0 H4.7 L1.2 9 M1.4 4.4 H4"/><path vector-effect="non-scaling-stroke" transform="translate(23.30 0) scale(1.5111)" d="M0.1 0.6 C0.6 0.2 1.3 0 2.2 0 C3.8 0 4.5 0.9 4.5 2.2 C4.5 3.5 3.6 4.3 2 4.3 C3.9 4.3 4.7 5.3 4.7 6.6 C4.7 8.1 3.8 9 2.2 9 C1.3 9 0.5 8.8 0 8.4"/><path vector-effect="non-scaling-stroke" transform="translate(33.70 0) scale(1.5111)" d="M0.4 8.3 V9"/><path vector-effect="non-scaling-stroke" transform="translate(38.00 0) scale(1.5111)" d="M4.2 0.4 C3.7 0.1 3.1 0 2.5 0 C0.9 0 0 1.8 0 5 C0 7.8 0.9 9 2.35 9 C3.8 9 4.7 8 4.7 6.3 C4.7 4.6 3.8 3.6 2.35 3.6 C1.2 3.6 0.3 4.3 0 5.2"/><path vector-effect="non-scaling-stroke" transform="translate(46.60 0) scale(1.5111)" d="M3.9 9 V0 L0 6.3 H5.3"/></g></g><g transform="translate(650.1 727.8) rotate(-90)" fill="none" stroke="#ffffff" stroke-width="1.2" vector-effect="non-scaling-stroke" stroke-linecap="round" stroke-linejoin="round"><g style="vector-effect:non-scaling-stroke"><path vector-effect="non-scaling-stroke" transform="translate(0.00 0) scale(1.5111)" d="M3.05 0 V9 M3.05 1 C1 1 0 2.6 0 4.5 C0 6.4 1 8 3.05 8 C5.1 8 6.1 6.4 6.1 4.5 C6.1 2.6 5.1 1 3.05 1 Z"/><path vector-effect="non-scaling-stroke" transform="translate(10.80 0) scale(1.5111)" d="M0.5 8.6 C1 8.9 1.6 9 2.2 9 C3.8 9 4.7 7.2 4.7 4 C4.7 1.2 3.8 0 2.35 0 C0.9 0 0 1 0 2.7 C0 4.4 0.9 5.4 2.35 5.4 C3.5 5.4 4.4 4.7 4.7 3.8"/><path vector-effect="non-scaling-stroke" transform="translate(21.50 0) scale(1.5111)" d="M0 0 H4.7 L1.2 9 M1.4 4.4 H4"/><path vector-effect="non-scaling-stroke" transform="translate(30.60 0) scale(1.5111)" d="M0.4 8.3 V9"/><path vector-effect="non-scaling-stroke" transform="translate(34.00 0) scale(1.5111)" d="M4.2 0.4 C3.7 0.1 3.1 0 2.5 0 C0.9 0 0 1.8 0 5 C0 7.8 0.9 9 2.35 9 C3.8 9 4.7 8 4.7 6.3 C4.7 4.6 3.8 3.6 2.35 3.6 C1.2 3.6 0.3 4.3 0 5.2"/><path vector-effect="non-scaling-stroke" transform="translate(46.40 0) scale(1.5111)" d="M4.2 0.4 C3.7 0.1 3.1 0 2.5 0 C0.9 0 0 1.8 0 5 C0 7.8 0.9 9 2.35 9 C3.8 9 4.7 8 4.7 6.3 C4.7 4.6 3.8 3.6 2.35 3.6 C1.2 3.6 0.3 4.3 0 5.2"/><path vector-effect="non-scaling-stroke" transform="translate(64.60 0) scale(1.5111)" d="M0 0 V9 M0 5.4 C0.5 4 1.3 3.3 2.5 3.3 C4 3.3 4.9 4.2 4.9 5.6 V9"/><path vector-effect="non-scaling-stroke" transform="translate(74.80 0) scale(1.5111)" d="M0 1.8 L2.6 0 V9"/><path vector-effect="non-scaling-stroke" transform="translate(80.50 0) scale(1.5111)" d="M0 1.8 L2.6 0 V9"/></g></g><rect x="196.5" y="490" width="10" height="10" fill="#0000c8"/></svg>
<div style="left:770px;top:120px;width:262px;height:19px;background:linear-gradient(#e2e2e2,#d6d6d6);border:1px solid #c4c4c4"></div>
<span class="t" style="left:771.5px;top:124.69px;font-size:11px;color:#000;">Property Editor</span>
<svg style="left:1003px;top:125px" width="9" height="9" viewBox="0 0 9 9"><path d="M3 1 H8 V5.5 H6" stroke="#000" stroke-width="1" fill="none"/><path d="M3 0.5 H8.5" stroke="#000" stroke-width="1.6"/><rect x="0.5" y="3.5" width="5" height="5" fill="none" stroke="#000"/><path d="M0.5 3.8 H5.5" stroke="#000" stroke-width="1.6"/></svg>
<svg style="left:1018px;top:125px" width="10" height="9" viewBox="0 0 10 9"><path d="M1.2 1 L8.8 8 M8.8 1 L1.2 8" stroke="#000" stroke-width="1.8"/></svg>
<div style="left:770px;top:141px;width:262px;height:372px;background:#f0f0f0;border:1px solid #a0a0a0"></div>
<div style="left:1015px;top:142px;width:16px;height:370px;background:linear-gradient(90deg,#e8e8e8,#f4f4f4 50%,#ececec)"></div>
<svg style="left:1018px;top:148px" width="10" height="6" viewBox="0 0 10 6"><path d="M1 5 L5 1 L9 5 Z" fill="#3a3a3a"/></svg>
<svg style="left:1018px;top:500px" width="10" height="6" viewBox="0 0 10 6"><path d="M1 1 L5 5 L9 1 Z" fill="#3a3a3a"/></svg>
<div style="left:1016px;top:161px;width:14px;height:251px;border:1px solid #9a9a9a;border-radius:2px;background:linear-gradient(90deg,#f6f6f6,#e4e4e4 55%,#d6d6d6)"></div>
<div style="left:1020px;top:282px;width:6px;height:1px;background:#555"></div>
<div style="left:1020px;top:285px;width:6px;height:1px;background:#555"></div>
<div style="left:1020px;top:288px;width:6px;height:1px;background:#555"></div>
<span class="t" style="left:780px;top:155.69px;font-size:11px;color:#000;">Selection:</span>
<div class="combo" style="left:833px;top:151px;width:172px;height:20px"></div>
<svg style="left:991px;top:158.5px" width="9" height="6" viewBox="0 0 9 6"><path d="M0.5 0.5 H8.5 L4.5 5.5 Z" fill="#000"/></svg>
<span class="t" style="left:836px;top:155.69px;font-size:11px;color:#000;">Line (1)</span>
<div style="left:781px;top:184px;width:223px;height:155px;border:1px solid #dadada;border-radius:3px;background:#f0f0f0"></div>
<div style="left:786px;top:180px;width:46px;height:10px;background:#f0f0f0"></div>
<span class="t" style="left:789px;top:178.69px;font-size:11px;color:#000;">General</span>
<span class="t" style="right:191px;top:201.7px;font-size:11px">Layer:</span>
<span class="t" style="right:191px;top:224.7px;font-size:11px">Color:</span>
<span class="t" style="right:191px;top:248.7px;font-size:11px">Lineweight:</span>
<span class="t" style="right:191px;top:272.7px;font-size:11px">Linetype:</span>
<span class="t" style="right:191px;top:295.7px;font-size:11px">Draw Order:</span>
<span class="t" style="right:191px;top:317.7px;font-size:11px">Handle:</span>
<div class="combo" style="left:856px;top:197px;width:114px;height:20px"></div>
<svg style="left:956px;top:204.5px" width="9" height="6" viewBox="0 0 9 6"><path d="M0.5 0.5 H8.5 L4.5 5.5 Z" fill="#000"/></svg>
<span class="t" style="left:860px;top:201.69px;font-size:11px;color:#000;">construction</span>
<svg style="left:979px;top:201px" width="11" height="11" viewBox="0 0 11 11"><path d="M5.5 0.5 V10.5 M0.5 5.5 H10.5" stroke="#cc1010" stroke-width="2.2"/></svg>
<div class="combo" style="left:856px;top:219px;width:139px;height:22px"></div>
<svg style="left:981px;top:227.5px" width="9" height="6" viewBox="0 0 9 6"><path d="M0.5 0.5 H8.5 L4.5 5.5 Z" fill="#000"/></svg>
<div style="left:861px;top:225px;width:32px;height:10px;background:#fff;border:1px solid #000"></div>
<span class="t" style="left:895px;top:224.69px;font-size:11px;color:#000;">By Layer</span>
<div class="combo" style="left:856px;top:243px;width:139px;height:21px"></div>
<svg style="left:981px;top:251.0px" width="9" height="6" viewBox="0 0 9 6"><path d="M0.5 0.5 H8.5 L4.5 5.5 Z" fill="#000"/></svg>
<div style="left:861px;top:254px;width:32px;height:1px;background:#000"></div>
<span class="t" style="left:895px;top:248.69px;font-size:11px;color:#000;">By Layer</span>
<div class="combo" style="left:856px;top:267px;width:139px;height:21px"></div>
<svg style="left:981px;top:275.0px" width="9" height="6" viewBox="0 0 9 6"><path d="M0.5 0.5 H8.5 L4.5 5.5 Z" fill="#000"/></svg>
<span class="t" style="left:895px;top:272.69px;font-size:11px;color:#000;">By Layer</span>
<div style="left:856px;top:291px;width:139px;height:20px;background:#fff;border:1px solid #c9cbd0;border-top-color:#abadb3;border-radius:2px"></div>
<span class="t" style="left:860px;top:295.69px;font-size:11px;color:#000;">30</span>
<div style="left:856px;top:314px;width:139px;height:19px;background:#f0f0f0;border:1px solid #d6d6d6;border-top-color:#cfcfcf;border-radius:2px"></div>
<span class="t" style="left:860px;top:317.69px;font-size:11px;color:#000;">0x70</span>
<div style="left:781px;top:353px;width:223px;height:170px;border:1px solid #dadada;border-radius:3px;background:#f0f0f0"></div>
<div style="left:786px;top:349px;width:52px;height:10px;background:#f0f0f0"></div>
<span class="t" style="left:789px;top:347.69px;font-size:11px;color:#000;">Geometry</span>
<span class="t" style="right:214px;top:373.7px;font-size:11px">Length:</span>
<div style="left:833px;top:370px;width:161px;height:19px;background:#fff;border:1px solid #c9cbd0;border-top-color:#abadb3;border-radius:2px"></div>
<span class="t" style="left:837px;top:373.69px;font-size:11px;color:#000;">120</span>
<span class="t" style="right:214px;top:397.7px;font-size:11px">Angle:</span>
<div style="left:833px;top:394px;width:161px;height:19px;background:#fff;border:1px solid #c9cbd0;border-top-color:#abadb3;border-radius:2px"></div>
<span class="t" style="left:837px;top:397.69px;font-size:11px;color:#000;">0</span>
<span class="t" style="right:214px;top:438.7px;font-size:11px">X:</span>
<div style="left:833px;top:435px;width:161px;height:19px;background:#fff;border:1px solid #c9cbd0;border-top-color:#abadb3;border-radius:2px"></div>
<span class="t" style="left:837px;top:438.69px;font-size:11px;color:#000;">0</span>
<span class="t" style="right:214px;top:462.7px;font-size:11px">Y:</span>
<div style="left:833px;top:459px;width:161px;height:19px;background:#fff;border:1px solid #c9cbd0;border-top-color:#abadb3;border-radius:2px"></div>
<span class="t" style="left:837px;top:462.69px;font-size:11px;color:#000;">36.82</span>
<span class="t" style="right:214px;top:502.7px;font-size:11px">X:</span>
<div style="left:833px;top:499px;width:161px;height:19px;background:#fff;border:1px solid #c9cbd0;border-top-color:#abadb3;border-radius:2px"></div>
<span class="t" style="left:837px;top:502.69px;font-size:11px;color:#000;">120</span>
<span class="t" style="left:790px;top:418.69px;font-size:11px;color:#000;font-weight:bold">Start Point</span>
<span class="t" style="left:790px;top:483.69px;font-size:11px;color:#000;font-weight:bold">End Point</span>
<div style="left:771px;top:512px;width:244px;height:1px;background:#a0a0a0"></div>
<div style="left:770px;top:513px;width:262px;height:5px;background:#f0f0f0"></div>
<div style="left:770px;top:512px;width:262px;height:1px;background:#a0a0a0"></div>
<div style="left:770px;top:518px;width:262px;height:19px;background:linear-gradient(#e2e2e2,#d6d6d6);border:1px solid #c4c4c4"></div>
<span class="t" style="left:771.5px;top:522.69px;font-size:11px;color:#000;">Layer List</span>
<svg style="left:1003px;top:523px" width="9" height="9" viewBox="0 0 9 9"><path d="M3 1 H8 V5.5 H6" stroke="#000" stroke-width="1" fill="none"/><path d="M3 0.5 H8.5" stroke="#000" stroke-width="1.6"/><rect x="0.5" y="3.5" width="5" height="5" fill="none" stroke="#000"/><path d="M0.5 3.8 H5.5" stroke="#000" stroke-width="1.6"/></svg>
<svg style="left:1018px;top:523px" width="10" height="9" viewBox="0 0 10 9"><path d="M1.2 1 L8.8 8 M8.8 1 L1.2 8" stroke="#000" stroke-width="1.8"/></svg>
<div style="left:771px;top:540px;width:50px;height:19px;border:1px solid #8c8c8c;border-radius:3px;background:linear-gradient(#f2f2f2 0%,#ebebeb 48%,#dcdcdc 52%,#d2d2d2 100%)"></div>
<div style="left:823px;top:540px;width:50px;height:19px;border:1px solid #8c8c8c;border-radius:3px;background:linear-gradient(#f2f2f2 0%,#ebebeb 48%,#dcdcdc 52%,#d2d2d2 100%)"></div>
<div style="left:876px;top:540px;width:49px;height:19px;border:1px solid #8c8c8c;border-radius:3px;background:linear-gradient(#f2f2f2 0%,#ebebeb 48%,#dcdcdc 52%,#d2d2d2 100%)"></div>
<div style="left:928px;top:540px;width:50px;height:19px;border:1px solid #c4c4c4;border-radius:3px;background:#f4f4f4"></div>
<div style="left:981px;top:540px;width:50px;height:19px;border:1px solid #8c8c8c;border-radius:3px;background:linear-gradient(#f2f2f2 0%,#ebebeb 48%,#dcdcdc 52%,#d2d2d2 100%)"></div>
<svg style="left:788px;top:544px" width="16" height="12" viewBox="0 0 16 12"><path d="M0.3 6 C3 0.5 12.5 -0.5 15.7 5.5 C12.5 12 3.5 12 0.3 6 Z" fill="#000"/><circle cx="8" cy="6" r="3.6" fill="#fff"/><circle cx="8" cy="6.2" r="2.3" fill="#000"/><circle cx="7.2" cy="5.3" r=".8" fill="#fff"/></svg>
<svg style="left:840px;top:544px" width="16" height="12" viewBox="0 0 16 12"><path d="M0.3 6 C3 0.5 12.5 -0.5 15.7 5.5 C12.5 12 3.5 12 0.3 6 Z" fill="#b4b4b4"/><circle cx="8" cy="6" r="3.6" fill="#fff"/><circle cx="8" cy="6.2" r="2.3" fill="#b4b4b4"/><circle cx="7.2" cy="5.3" r=".8" fill="#fff"/></svg>
<svg style="left:894px;top:543px" width="14" height="14" viewBox="0 0 14 14"><path d="M7 1 V13 M1 7 H13" stroke="#cc1010" stroke-width="2.6"/></svg>
<div style="left:946px;top:548.5px;width:12px;height:3px;background:#9a9a9a"></div>
<svg style="left:997px;top:541px" width="18" height="18" viewBox="0 0 18 18"><path d="M3 14 L13.5 3.5 L16 6 L5.5 16.5 Z" fill="#f2b848" stroke="#9a6a10" stroke-width=".8"/><path d="M2.2 17.3 L3 14 L5.5 16.5 Z" fill="#f0d8a8" stroke="#555" stroke-width=".5"/><path d="M13.5 3.5 L14.8 2.2 Q15.5 1.5 16.3 2.2 L17.3 3.2 Q18 4 17.3 4.7 L16 6 Z" fill="#d86060"/></svg>
<div style="left:770px;top:561px;width:262px;height:194px;background:#fff;border:1px solid #8f8f8f"></div>
<div style="left:772px;top:564px;width:256px;height:17px;border:1px solid #d9d9d9;border-radius:3px;background:linear-gradient(#f8f8f8,#e6e6e6)"></div>
<svg style="left:775px;top:566px" width="16" height="12" viewBox="0 0 16 12"><path d="M0.3 6 C3 0.5 12.5 -0.5 15.7 5.5 C12.5 12 3.5 12 0.3 6 Z" fill="#173a66"/><circle cx="8" cy="6" r="3.6" fill="#fff"/><circle cx="8" cy="6.2" r="2.3" fill="#173a66"/><circle cx="7.2" cy="5.3" r=".8" fill="#fff"/></svg>
<svg style="left:794px;top:565px" width="12" height="14" viewBox="0 0 12 14"><path d="M3 7 V4.8 Q3 1.2 6 1.2 Q9 1.2 9 4.8 V7" stroke="#7a9cc4" stroke-width="1.5" fill="none"/><rect x="1.5" y="6.5" width="9" height="7" fill="#7a9cc4"/></svg>
<span class="t" style="left:813.5px;top:566.44px;font-size:12px;color:#000;">0</span>
<svg style="left:775px;top:584px" width="16" height="12" viewBox="0 0 16 12"><path d="M0.3 6 C3 0.5 12.5 -0.5 15.7 5.5 C12.5 12 3.5 12 0.3 6 Z" fill="#000"/><circle cx="8" cy="6" r="3.6" fill="#fff"/><circle cx="8" cy="6.2" r="2.3" fill="#000"/><circle cx="7.2" cy="5.3" r=".8" fill="#fff"/></svg>
<svg style="left:794px;top:583px" width="12" height="14" viewBox="0 0 12 14"><path d="M3 7 V4.8 Q3 1.2 6 1.2 Q9 1.2 9 4.8 V7" stroke="#a6a6a6" stroke-width="1.5" fill="none"/><rect x="1.5" y="6.5" width="9" height="7" fill="#a6a6a6"/></svg>
<span class="t" style="left:813.5px;top:584.39px;font-size:12px;color:#000;">axes</span>
<svg style="left:775px;top:602px" width="16" height="12" viewBox="0 0 16 12"><path d="M0.3 6 C3 0.5 12.5 -0.5 15.7 5.5 C12.5 12 3.5 12 0.3 6 Z" fill="#a8a8a8"/><circle cx="8" cy="6" r="3.6" fill="#fff"/><circle cx="8" cy="6.2" r="2.3" fill="#a8a8a8"/><circle cx="7.2" cy="5.3" r=".8" fill="#fff"/></svg>
<svg style="left:794px;top:601px" width="12" height="14" viewBox="0 0 12 14"><path d="M3 7 V4.8 Q3 1.2 6 1.2 Q9 1.2 9 4.8 V7" stroke="#a6a6a6" stroke-width="1.5" fill="none"/><rect x="1.5" y="6.5" width="9" height="7" fill="#a6a6a6"/></svg>
<span class="t" style="left:813.5px;top:602.34px;font-size:12px;color:#000;">construction</span>
<svg style="left:775px;top:620px" width="16" height="12" viewBox="0 0 16 12"><path d="M0.3 6 C3 0.5 12.5 -0.5 15.7 5.5 C12.5 12 3.5 12 0.3 6 Z" fill="#000"/><circle cx="8" cy="6" r="3.6" fill="#fff"/><circle cx="8" cy="6.2" r="2.3" fill="#000"/><circle cx="7.2" cy="5.3" r=".8" fill="#fff"/></svg>
<svg style="left:794px;top:619px" width="12" height="14" viewBox="0 0 12 14"><path d="M3 7 V4.8 Q3 1.2 6 1.2 Q9 1.2 9 4.8 V7" stroke="#a6a6a6" stroke-width="1.5" fill="none"/><rect x="1.5" y="6.5" width="9" height="7" fill="#a6a6a6"/></svg>
<span class="t" style="left:813.5px;top:620.29px;font-size:12px;color:#000;">contour</span>
<svg style="left:775px;top:638px" width="16" height="12" viewBox="0 0 16 12"><path d="M0.3 6 C3 0.5 12.5 -0.5 15.7 5.5 C12.5 12 3.5 12 0.3 6 Z" fill="#000"/><circle cx="8" cy="6" r="3.6" fill="#fff"/><circle cx="8" cy="6.2" r="2.3" fill="#000"/><circle cx="7.2" cy="5.3" r=".8" fill="#fff"/></svg>
<svg style="left:794px;top:637px" width="12" height="14" viewBox="0 0 12 14"><path d="M3 7 V4.8 Q3 1.2 6 1.2 Q9 1.2 9 4.8 V7" stroke="#a6a6a6" stroke-width="1.5" fill="none"/><rect x="1.5" y="6.5" width="9" height="7" fill="#a6a6a6"/></svg>
<span class="t" style="left:813.5px;top:638.24px;font-size:12px;color:#000;">dim</span>
<svg style="left:775px;top:656px" width="16" height="12" viewBox="0 0 16 12"><path d="M0.3 6 C3 0.5 12.5 -0.5 15.7 5.5 C12.5 12 3.5 12 0.3 6 Z" fill="#000"/><circle cx="8" cy="6" r="3.6" fill="#fff"/><circle cx="8" cy="6.2" r="2.3" fill="#000"/><circle cx="7.2" cy="5.3" r=".8" fill="#fff"/></svg>
<svg style="left:794px;top:655px" width="12" height="14" viewBox="0 0 12 14"><path d="M3 7 V4.8 Q3 1.2 6 1.2 Q9 1.2 9 4.8 V7" stroke="#a6a6a6" stroke-width="1.5" fill="none"/><rect x="1.5" y="6.5" width="9" height="7" fill="#a6a6a6"/></svg>
<span class="t" style="left:813.5px;top:656.19px;font-size:12px;color:#000;">hatch</span>
<svg style="left:775px;top:674px" width="16" height="12" viewBox="0 0 16 12"><path d="M0.3 6 C3 0.5 12.5 -0.5 15.7 5.5 C12.5 12 3.5 12 0.3 6 Z" fill="#000"/><circle cx="8" cy="6" r="3.6" fill="#fff"/><circle cx="8" cy="6.2" r="2.3" fill="#000"/><circle cx="7.2" cy="5.3" r=".8" fill="#fff"/></svg>
<svg style="left:794px;top:673px" width="12" height="14" viewBox="0 0 12 14"><path d="M3 7 V4.8 Q3 1.2 6 1.2 Q9 1.2 9 4.8 V7" stroke="#a6a6a6" stroke-width="1.5" fill="none"/><rect x="1.5" y="6.5" width="9" height="7" fill="#a6a6a6"/></svg>
<span class="t" style="left:813.5px;top:674.14px;font-size:12px;color:#000;">hatch_border</span>
<div style="left:8px;top:755px;width:1024px;height:3px;background:#f0f0f0"></div>
<div style="left:8px;top:758px;width:1024px;height:38px;background:#fff"></div>
<div style="left:8px;top:758px;width:1006px;height:37px;overflow:hidden">
<span class="t" style="left:6px;top:-3.3px;font-size:11px;color:#2a2ab8"><i style="font-size:10.3px">Command:</i> <span style="position:static;color:#15157a">snapauto</span></span>
<span class="t" style="left:6px;top:9.2px;font-size:11px;color:#2a2ab8"><i style="font-size:10.3px">Command:</i> <span style="position:static;color:#15157a">snapauto</span></span>
<span class="t" style="left:6px;top:21.7px;font-size:11px;color:#2a2ab8"><i style="font-size:10.3px">Command:</i> <span style="position:static;color:#15157a">linemenu</span></span>
</div>
<div style="left:1015px;top:758px;width:16px;height:37px;background:linear-gradient(90deg,#ececec,#f6f6f6)"></div>
<svg style="left:1018px;top:764px" width="10" height="6" viewBox="0 0 10 6"><path d="M1 5 L5 1 L9 5 Z" fill="#333"/></svg>
<svg style="left:1018px;top:783px" width="10" height="6" viewBox="0 0 10 6"><path d="M1 1 L5 5 L9 1 Z" fill="#333"/></svg>
<div style="left:8px;top:795px;width:1024px;height:1px;background:#9a9a9a"></div>
<div style="left:8px;top:796px;width:1024px;height:22px;background:#fff"></div>
<div style="left:8px;top:818px;width:1024px;height:1px;background:#9a9a9a"></div>
<div style="left:8px;top:796px;width:1px;height:22px;background:#9a9a9a"></div>
<div style="left:1031px;top:796px;width:1px;height:22px;background:#9a9a9a"></div>
<span class="t" style="left:9px;top:803.28px;font-size:10.3px;color:#000;">Command:</span>
<div style="left:8px;top:819px;width:1024px;height:37px;background:#efefef"></div>
<span class="t" style="left:10px;top:825.19px;font-size:11px;color:#000;">55.6638,36.4368</span>
<span class="t" style="left:11px;top:841.19px;font-size:11px;color:#000;">-</span>
<div style="left:161px;top:822px;width:1px;height:32px;background:#b8b8b8"></div>
<span class="t" style="left:164.5px;top:825.19px;font-size:11px;color:#000;">66.529&lt;33.2083</span>
<span class="t" style="left:166px;top:841.19px;font-size:11px;color:#000;">-</span>
<div style="left:316px;top:822px;width:1px;height:32px;background:#d0d0d0"></div>
<span class="t" style="right:613px;top:828px;font-size:9.3px;letter-spacing:-0.2px">Select entity or region</span>
<span class="t" style="right:613px;top:840px;font-size:9.3px;letter-spacing:-0.2px">Move entity or reference</span>
<svg style="left:434px;top:821px" width="30" height="34" viewBox="0 0 30 34"><defs><radialGradient id="gMouse" cx=".4" cy=".35" r=".75"><stop offset="0" stop-color="#ffffff"/><stop offset=".65" stop-color="#f4f4f4"/><stop offset="1" stop-color="#c9c9c9"/></radialGradient></defs><path d="M7 2.5 L9 5" stroke="#666" stroke-width="1.6"/><path d="M4 14 C2.5 6 8 3 14 4 C21 5 26 13 26.5 20 C27 28 21 32 15 31.5 C8 31 4.5 24 4 14 Z" fill="url(#gMouse)" stroke="#8a8a8a" stroke-width="1"/><path d="M6 13 C9 16 17 16 22 11" stroke="#dcdcdc" fill="none"/><ellipse cx="13.3" cy="10.5" rx="1.6" ry="2.6" fill="#4a5ac8" transform="rotate(-15 13.3 10.5)"/></svg>
<div style="left:579px;top:822px;width:1px;height:32px;background:#d0d0d0"></div>
<span class="t" style="left:583px;top:828px;font-size:9.2px;letter-spacing:-0.12px">Selected entities:</span>
<span class="t" style="left:583px;top:840px;font-size:9.2px;letter-spacing:-0.2px">1 Line on Layer "construction".</span>
<div style="left:776px;top:822px;width:1px;height:32px;background:#d0d0d0"></div>
<div style="left:909px;top:822px;width:1px;height:32px;background:#d0d0d0"></div>
<svg style="left:1018px;top:842px" width="12" height="12" viewBox="0 0 12 12"><g fill="#888"><rect x="9" y="1" width="1.5" height="1.5"/><rect x="6" y="4" width="1.5" height="1.5"/><rect x="9" y="4" width="1.5" height="1.5"/><rect x="3" y="7" width="1.5" height="1.5"/><rect x="6" y="7" width="1.5" height="1.5"/><rect x="9" y="7" width="1.5" height="1.5"/></g></svg></body></html>
